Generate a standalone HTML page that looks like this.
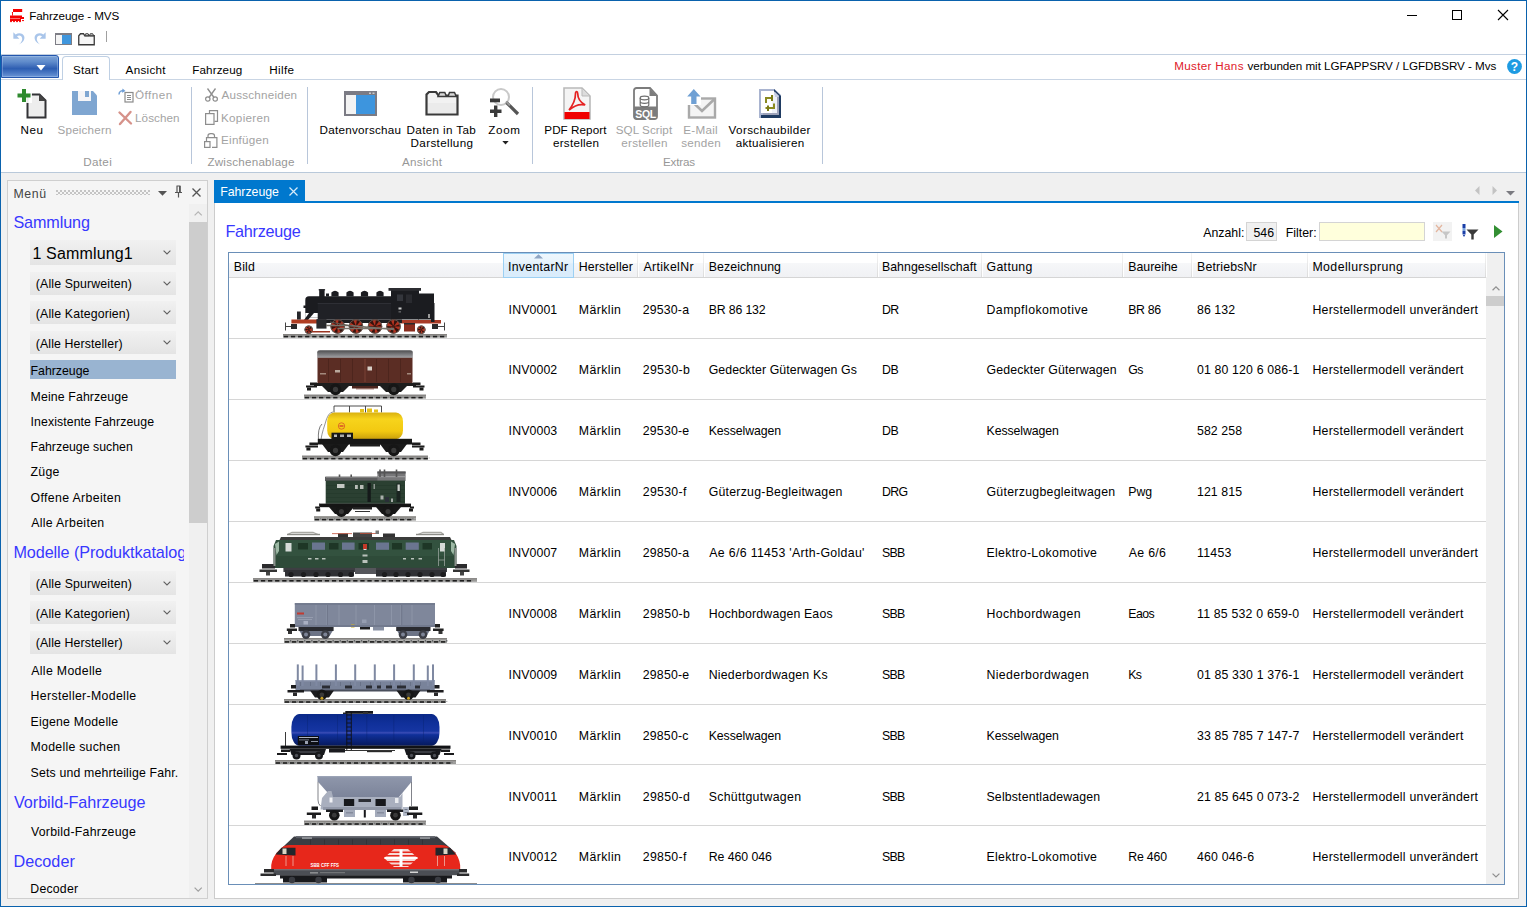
<!DOCTYPE html>
<html lang="de"><head><meta charset="utf-8"><title>Fahrzeuge - MVS</title>
<style>
html,body{margin:0;padding:0}
body{width:1527px;height:907px;overflow:hidden;position:relative;background:#f0f0f0;font-family:"Liberation Sans", sans-serif;color:#000}
.a{position:absolute;box-sizing:border-box}
.t{position:absolute;white-space:pre;line-height:1;}
svg{overflow:visible}
svg text{font-family:"Liberation Sans", sans-serif}
</style></head><body>
<div class="a" style="left:0px;top:0px;width:1527px;height:172px;background:#fff;"></div>
<div class="a" style="left:1px;top:54px;width:1525px;height:1px;background:#c3d0e0;"></div>
<div class="a" style="left:1px;top:79px;width:1525px;height:1px;background:#c9d5e4;"></div>
<div class="a" style="left:1px;top:172px;width:1525px;height:1px;background:#b9c9da;"></div>
<svg class="a" style="left:9px;top:8px;" width="16" height="15" viewBox="0 0 16 15"><g fill="#f50000"><rect x="4" y="1" width="9.200" height="3"/><rect x="3.100" y="4" width=".9" height="3.600"/><circle cx="3.400" cy="4.500" r=".6"/><path d="M1 7.500H13V9H15V11H12V13H1z"/><rect x="13" y="12.100" width="2" height="1"/><circle cx="2" cy="13.300" r="1"/><circle cx="5" cy="13.300" r="1"/><circle cx="8" cy="13.300" r="1"/><circle cx="11" cy="13.300" r="1"/></g><rect x="1.200" y="10.200" width="9.800" height=".7" fill="#f9a0a0"/></svg>
<svg class="a" style="left:1400px;top:5px;" width="120" height="22" viewBox="0 0 120 22"><g stroke="#000" stroke-width="1" fill="none" shape-rendering="crispEdges"><path d="M7 10.5h10"/><rect x="52.5" y="5.5" width="9" height="9"/></g><path d="M98 5l10 10M108 5l-10 10" stroke="#000" stroke-width="1.1" fill="none"/></svg>
<svg class="a" style="left:11px;top:31px;" width="15" height="15" viewBox="0 0 14 14"><path d="M2.2 1.2v6h5.6l-2.2-2.2c1.6-1.3 4-.9 4.7 1.2.7 2.2-.6 4.6-3.3 6.6 4.2-1.700 6.300-4.900 5.300-7.800-1.100-3-5-3.800-8-1.700z" fill="#a9c5ea"/></svg>
<svg class="a" style="left:33px;top:31px;" width="15" height="15" viewBox="0 0 14 14"><path d="M11.8 1.200v6h-5.600l2.200-2.200c-1.600-1.300-4-.9-4.700 1.200-.7 2.200.6 4.600 3.300 6.600-4.200-1.700-6.300-4.900-5.300-7.800 1.100-3 5-3.800 8-1.700z" fill="#a9c5ea"/></svg>
<svg class="a" style="left:55px;top:33px;" width="17" height="12" viewBox="0 0 17 12"><rect x="0.500" y="0.500" width="16" height="11" fill="#f4f4f4" stroke="#7d7d85"/><rect x="0" y="0" width="17" height="2" fill="#7d7d85"/><rect x="7" y="2" width="9" height="9" fill="#3f96dd"/></svg>
<svg class="a" style="left:78px;top:32.5px;" width="17" height="12.5" viewBox="0 0 34 25"><path d="M1.500 23.500V5.500L5 1.500h6l2.500 4H32.500V23.500z" fill="#f6f6f6" stroke="#3a3a3a" stroke-width="2.600"/><path d="M13.500 5.500l1.800-4h5l1.700 4zM23 5.500l1.500-4h5l1.800 4z" fill="#d9d9d9" stroke="#3a3a3a" stroke-width="2"/></svg>
<div class="a" style="left:106px;top:31px;width:1px;height:11px;background:#a0a0a0;"></div>
<div class="a" style="left:1px;top:55px;width:58px;height:23px;background:linear-gradient(#7da3d6 0,#5f8bcb 28%,#3b69b8 52%,#2d5eb2 60%,#4a78c3 80%,#6b96d6 100%);border:1px solid #2456ad;border-radius:0 3px 0 0;box-shadow:inset 0 0 0 1px rgba(190,215,245,.35);"></div>
<svg class="a" style="left:35.5px;top:64.5px;" width="10" height="6" viewBox="0 0 10 6"><path d="M0.500 0h9L5 5.500z" fill="#fff"/></svg>
<div class="a" style="left:62px;top:56px;width:48px;height:24px;background:#fff;border:1px solid #bfd0e4;border-bottom:none;border-radius:4px 4px 0 0;"></div>
<svg class="a" style="left:1507px;top:59px;" width="15" height="15" viewBox="0 0 15 15"><circle cx="7.500" cy="7.500" r="7.400" fill="#1e9be2"/><text x="7.500" y="12" font-size="12" font-weight="bold" fill="#fff" text-anchor="middle">?</text></svg>
<div class="a" style="left:0px;top:0px;width:1527px;height:1px;background:#0a62ad;"></div>
<div class="a" style="left:0px;top:0px;width:1px;height:907px;background:#0a62ad;"></div>
<div class="a" style="left:1526px;top:0px;width:1px;height:907px;background:#0a62ad;"></div>
<div class="a" style="left:0px;top:906px;width:1527px;height:1px;background:#0a62ad;"></div>
<div class="a" style="left:191px;top:87px;width:1px;height:77px;background:#b8c6da;"></div>
<div class="a" style="left:307px;top:87px;width:1px;height:77px;background:#b8c6da;"></div>
<div class="a" style="left:532px;top:87px;width:1px;height:77px;background:#b8c6da;"></div>
<div class="a" style="left:822px;top:87px;width:1px;height:77px;background:#b8c6da;"></div>
<svg class="a" style="left:17px;top:88.5px;" width="30" height="30" viewBox="0 0 30 30"><path d="M10.500 5.500h12l6 6V28.500h-18z" fill="#ededed" stroke="#333336" stroke-width="2"/><path d="M22 5v7h7z" fill="#444"/><rect x="0" y="0" width="15" height="14" fill="#fff" opacity=".9"/><path d="M5 0h4v4.500h4.500v4H9V13H5V8.500H.5v-4H5z" fill="#2f8a2f"/></svg>
<svg class="a" style="left:72px;top:91px;" width="25" height="24" viewBox="0 0 25 24"><path d="M0 0h21l4 4.500V24H0z" fill="#7fa6d1"/><rect x="6" y="0" width="13" height="10" fill="#f5f5f7"/><rect x="13" y="0" width="4" height="6" fill="#7fa6d1"/></svg>
<svg class="a" style="left:118px;top:88px;" width="16" height="15" viewBox="0 0 16 15"><rect x="7" y="4.500" width="8" height="9.500" fill="#fff" stroke="#8b8b8b" stroke-width="1.200"/><path d="M9 7.500h4M9 9.500h4M9 11.500h4" stroke="#8b8b8b" stroke-width="1"/><path d="M1 6.500c0-3 2.500-4.500 5-3.500" fill="none" stroke="#6f9fd6" stroke-width="1.500"/><path d="M4.500 0.500l3 2.500-3.500 1.800z" fill="#6f9fd6"/></svg>
<svg class="a" style="left:118px;top:111px;" width="15" height="14" viewBox="0 0 15 14"><path d="M1.500 1.500L13 12.500M12.500 1L2 13" stroke="#d6928a" stroke-width="2.400" fill="none" stroke-linecap="round"/></svg>
<svg class="a" style="left:205px;top:88px;" width="13" height="14" viewBox="0 0 13 14"><path d="M2.500 0.500L9 9.500M10.500 0.500L4 9.500" stroke="#8d8d8d" stroke-width="1.300" fill="none"/><circle cx="2.800" cy="11" r="2.200" fill="none" stroke="#8d8d8d" stroke-width="1.200"/><circle cx="10.200" cy="11" r="2.200" fill="none" stroke="#8d8d8d" stroke-width="1.200"/></svg>
<svg class="a" style="left:205px;top:110px;" width="13" height="15" viewBox="0 0 13 15"><path d="M4.500 3.500V0.700h8v10.600H9.500" fill="none" stroke="#8d8d8d" stroke-width="1.200"/><rect x="0.600" y="3.600" width="8.400" height="10.800" fill="#fdfdfd" stroke="#8d8d8d" stroke-width="1.200"/></svg>
<svg class="a" style="left:204px;top:133px;" width="14" height="15" viewBox="0 0 14 15"><path d="M4 4.500V2.800C4 1.500 5 .6 6.500 .6h1.500C9.500 .6 10.500 1.500 10.500 2.800v1.700" fill="none" stroke="#8d8d8d" stroke-width="1.200"/><path d="M2.500 8V4.600h10.400v9.800H8" fill="none" stroke="#8d8d8d" stroke-width="1.200"/><rect x="0.600" y="8.600" width="5.400" height="5.800" fill="#fff" stroke="#8d8d8d" stroke-width="1.200"/></svg>
<svg class="a" style="left:344px;top:91px;" width="33" height="25" viewBox="0 0 33 25"><rect x="1" y="1" width="31" height="23" fill="#f3f3f3" stroke="#7b7b84" stroke-width="2"/><rect x="0" y="0" width="33" height="4" fill="#7b7b84"/><rect x="12" y="4" width="19" height="19" fill="#3d95de"/><rect x="25" y="1.500" width="2" height="1.500" fill="#ccc"/><rect x="28.500" y="1.500" width="2" height="1.500" fill="#ccc"/></svg>
<svg class="a" style="left:425px;top:91px;" width="34" height="25" viewBox="0 0 34 25"><path d="M1.500 23.500V3.500L4 1h7l2.500 3.500H32.500V23.500z" fill="#f2f2f2" stroke="#3a3a3a" stroke-width="2.200"/><path d="M13 5.500l1.800-4h5l1.700 4zM23 5.500l1.500-4h5l1.800 4z" fill="#d9d9d9" stroke="#3a3a3a" stroke-width="1.500"/><rect x="3" y="12" width="28" height="10" fill="#e6e6e6" opacity=".6"/></svg>
<svg class="a" style="left:489px;top:88px;" width="31" height="31" viewBox="0 0 31 31"><circle cx="12" cy="9" r="8" fill="#fff" stroke="#c9c9c9" stroke-width="2"/><path d="M17.500 14.500L29 26" stroke="#555" stroke-width="3.200"/><path d="M17 13.500l4 4" stroke="#999" stroke-width="2"/><rect x="1" y="10.500" width="10" height="3.800" fill="#3a3a3a"/><path d="M5 17.500h3.400v4H12.500v3.400H8.400V29H5v-4.100H1V21.500h4z" fill="#3a3a3a"/></svg>
<svg class="a" style="left:502px;top:141px;" width="7" height="4" viewBox="0 0 7 4"><path d="M0.300 0h6.400L3.500 3.600z" fill="#222"/></svg>
<svg class="a" style="left:563px;top:87px;" width="28" height="33" viewBox="0 0 28 33"><path d="M1 1h18l8 8v23H1z" fill="#f4f4f4" stroke="#b9b9b9" stroke-width="1.600"/><path d="M19 1v8h8z" fill="#dcdcdc" stroke="#b9b9b9" stroke-width="1"/><rect x="1.500" y="25" width="25" height="7" fill="#f00000"/><path d="M6 23c4-5 6.500-11 6.500-16.500 0-2.500 2.200-2.500 2.200 0 0 5 3 9 7.500 11.500-4.500-1.200-10-.2-16.200 5z" fill="none" stroke="#e52222" stroke-width="1.700"/></svg>
<svg class="a" style="left:633px;top:87px;" width="25" height="33" viewBox="0 0 25 33"><path d="M1 3.500c0-1.400 1-2.500 2.500-2.500H17l7 7.500V29.500c0 1.400-1 2.500-2.500 2.500h-18C2 32 1 31 1 29.500z" fill="#fff" stroke="#7c7c7c" stroke-width="1.800"/><path d="M16.500 1v8H24z" fill="#7c7c7c"/><path d="M1 19.500h23v10.500c0 1.200-1 2-2.500 2h-18C2 32 1 31 1 30z" fill="#7c7c7c"/><ellipse cx="11.500" cy="11" rx="4.300" ry="1.800" fill="#fff" stroke="#6e6e6e" stroke-width="1.200"/><path d="M7.200 11v7c0 1 2 1.800 4.300 1.800s4.300-.8 4.300-1.800v-7M7.200 14.500c0 1 2 1.800 4.300 1.800s4.300-.8 4.300-1.800" fill="none" stroke="#6e6e6e" stroke-width="1.200"/><text x="12.500" y="30.600" font-size="10.500" font-weight="bold" fill="#fff" text-anchor="middle" letter-spacing="-.4">SQL</text></svg>
<svg class="a" style="left:687px;top:89px;" width="30" height="30" viewBox="0 0 30 30"><rect x="2" y="9.500" width="26" height="19" fill="#f4f4f4" stroke="#a9a9a9" stroke-width="2.400"/><path d="M3 10.500l12 11.500 12-11.500" fill="none" stroke="#a9a9a9" stroke-width="2.600"/><rect x="0" y="0" width="14" height="16" fill="#fff"/><path d="M6.800 0l6.700 7.500H9.500V15H4.200V7.500H.2z" fill="#6fa0d4"/></svg>
<svg class="a" style="left:759px;top:89px;" width="23" height="30" viewBox="0 0 23 30"><path d="M0 0H15.500L22 6V29H0z" fill="#a9b4d0"/><rect x="2" y="2" width="13.500" height="22" fill="#fff"/><rect x="13" y="6" width="5" height="18" fill="#eef1f8"/><rect x="4" y="24" width="14" height="2" fill="#9ea3ba"/><rect x="18" y="8" width="2" height="18" fill="#9ea3ba"/><rect x="2" y="26" width="20" height="3" fill="#1f3b62"/><rect x="20" y="7" width="2" height="22" fill="#1f3b62"/><path d="M15 0L22 7H20L15 2.500z" fill="#1f3b62"/><path d="M15.500 2.500L19.500 6.500V8H16z" fill="#c9d0e4"/><path d="M7 14V9H13.500M15 14.500V19H6.500" fill="none" stroke="#8a8a20" stroke-width="2"/><path d="M13 6V12M9 16.500V22" fill="none" stroke="#7a7a14" stroke-width="2"/></svg>
<div class="a" style="left:7px;top:180px;width:201px;height:719px;background:#f5f5f5;border:1px solid #cfcfcf;"></div>
<div class="a" style="left:56px;top:190px;width:94px;height:5px;background-image:radial-gradient(circle at 1px 1px,#c4c4c4 .8px,transparent 1.1px),radial-gradient(circle at 3px 3px,#c4c4c4 .8px,transparent 1.100px);background-size:4px 4px;"></div>
<svg class="a" style="left:158px;top:191px;" width="9" height="5" viewBox="0 0 9 5"><path d="M0 0h9L4.500 4.800z" fill="#555"/></svg>
<svg class="a" style="left:174px;top:185px;" width="9" height="13" viewBox="0 0 9 13"><path d="M2.500 1h4M3 1v6M6 1v6M1 7.500h7M4.500 7.500v5" stroke="#555" stroke-width="1.200" fill="none"/><rect x="5" y="1" width="1.600" height="6" fill="#555"/></svg>
<svg class="a" style="left:192px;top:188px;" width="9" height="9" viewBox="0 0 9 9"><path d="M0.500 .5l8 8M8.500 .5l-8 8" stroke="#555" stroke-width="1.300" fill="none"/></svg>
<div class="a" style="left:189px;top:204px;width:18px;height:694px;background:#f0f0f0;"></div>
<div class="a" style="left:189px;top:222px;width:18px;height:301px;background:#cdcdcd;"></div>
<svg class="a" style="left:193.5px;top:211.3px;" width="8.4" height="5" viewBox="0 0 10 6"><path d="M0.700 5.300L5 1l4.300 4.300" stroke="#b5b5b5" stroke-width="1.500" fill="none"/></svg>
<svg class="a" style="left:193.7px;top:886.5px;" width="8.4" height="5" viewBox="0 0 10 6"><path d="M0.700 .7L5 5l4.300-4.300" stroke="#a0a0a0" stroke-width="1.500" fill="none"/></svg>
<div class="a" style="left:30px;top:240px;width:146px;height:25px;background:linear-gradient(#f1f1f1,#e4e4e4);"></div>
<svg class="a" style="left:163px;top:250.0px;" width="8" height="5" viewBox="0 0 8 5"><path d="M0.600 .6L4 4l3.400-3.400" stroke="#606060" stroke-width="1.100" fill="none"/></svg>
<div class="a" style="left:30px;top:272px;width:146px;height:23px;background:linear-gradient(#f1f1f1,#e4e4e4);"></div>
<svg class="a" style="left:163px;top:281.0px;" width="8" height="5" viewBox="0 0 8 5"><path d="M0.600 .6L4 4l3.400-3.400" stroke="#606060" stroke-width="1.100" fill="none"/></svg>
<div class="a" style="left:30px;top:301px;width:146px;height:23px;background:linear-gradient(#f1f1f1,#e4e4e4);"></div>
<svg class="a" style="left:163px;top:310.0px;" width="8" height="5" viewBox="0 0 8 5"><path d="M0.600 .6L4 4l3.400-3.400" stroke="#606060" stroke-width="1.100" fill="none"/></svg>
<div class="a" style="left:30px;top:331px;width:146px;height:23px;background:linear-gradient(#f1f1f1,#e4e4e4);"></div>
<svg class="a" style="left:163px;top:340.0px;" width="8" height="5" viewBox="0 0 8 5"><path d="M0.600 .6L4 4l3.400-3.400" stroke="#606060" stroke-width="1.100" fill="none"/></svg>
<div class="a" style="left:30px;top:360px;width:146px;height:19px;background:#99b4d1;"></div>
<div class="a" style="left:30px;top:571px;width:146px;height:24px;background:linear-gradient(#f1f1f1,#e4e4e4);"></div>
<svg class="a" style="left:163px;top:580.5px;" width="8" height="5" viewBox="0 0 8 5"><path d="M0.600 .6L4 4l3.400-3.400" stroke="#606060" stroke-width="1.100" fill="none"/></svg>
<div class="a" style="left:30px;top:601px;width:146px;height:23px;background:linear-gradient(#f1f1f1,#e4e4e4);"></div>
<svg class="a" style="left:163px;top:610.0px;" width="8" height="5" viewBox="0 0 8 5"><path d="M0.600 .6L4 4l3.400-3.400" stroke="#606060" stroke-width="1.100" fill="none"/></svg>
<div class="a" style="left:30px;top:631px;width:146px;height:23px;background:linear-gradient(#f1f1f1,#e4e4e4);"></div>
<svg class="a" style="left:163px;top:640.0px;" width="8" height="5" viewBox="0 0 8 5"><path d="M0.600 .6L4 4l3.400-3.400" stroke="#606060" stroke-width="1.100" fill="none"/></svg>
<div class="a" style="left:214px;top:203px;width:1305px;height:696px;background:#fff;border:1px solid #ccc;border-top:none;"></div>
<div class="a" style="left:214px;top:201px;width:1305px;height:2px;background:#0078ce;"></div>
<div class="a" style="left:214px;top:180px;width:91px;height:22px;background:#0078ce;"></div>
<svg class="a" style="left:289px;top:187px;" width="9" height="9" viewBox="0 0 9 9"><path d="M0.500 .5l8 8M8.500 .5l-8 8" stroke="#d8ecfa" stroke-width="1.200" fill="none"/></svg>
<svg class="a" style="left:1475px;top:186px;" width="5" height="9" viewBox="0 0 5 9"><path d="M4.500 0v9L0 4.500z" fill="#c3c3c3"/></svg>
<svg class="a" style="left:1492px;top:186px;" width="5" height="9" viewBox="0 0 5 9"><path d="M0.500 0v9L5 4.500z" fill="#c3c3c3"/></svg>
<svg class="a" style="left:1506px;top:191px;" width="9" height="5" viewBox="0 0 9 5"><path d="M0 0h9L4.500 4.600z" fill="#7a7a80"/></svg>
<div class="a" style="left:1246px;top:222px;width:31px;height:19px;background:#f0f0f0;border:1px solid #d4d4d4;"></div>
<div class="a" style="left:1319px;top:222px;width:106px;height:19px;background:#ffffdc;border:1px solid #d4d4d4;"></div>
<div class="a" style="left:1433px;top:222px;width:19px;height:19px;background:#f2f2f2;"></div>
<svg class="a" style="left:1435px;top:224px;" width="16" height="15" viewBox="0 0 16 15"><path d="M1 1l6 7M7 1L1 8" stroke="#e3b59e" stroke-width="1.200" fill="none"/><path d="M6.500 7.500h9l-3.500 3.800v3.200h-2v-3.200z" fill="#c6c6c6"/></svg>
<svg class="a" style="left:1462px;top:224px;" width="17" height="16" viewBox="0 0 17 16"><rect x="0.500" y="0" width="3" height="4" fill="#1a3fa8"/><rect x="0.500" y="4" width="3" height="3" fill="#7aa2dc"/><rect x="0.500" y="7" width="3" height="3.500" fill="#1a3fa8"/><path d="M0.800 11h2.400L2 13z" fill="#1a3fa8"/><path d="M4.500 5.500h12l-4.800 5v5h-2.400v-5z" fill="#3a3a3a"/></svg>
<svg class="a" style="left:1493.5px;top:225px;" width="9" height="13" viewBox="0 0 9 13"><path d="M0 0v13l8.500-6.500z" fill="#338f33"/></svg>
<div class="a" style="left:228px;top:252px;width:1277px;height:633px;background:#fff;border:1px solid #6a8fb8;"></div>
<div class="a" style="left:229px;top:253px;width:1257px;height:25px;background:linear-gradient(#fff 0,#fff 40%,#f6f7f9 42%,#f0f1f4 100%);border-bottom:1px solid #d5d5d5;"></div>
<div class="a" style="left:1486px;top:253px;width:18px;height:631px;background:#f0f0f0;"></div>
<div class="a" style="left:1486px;top:296px;width:18px;height:10px;background:#cdcdcd;"></div>
<svg class="a" style="left:1491.5px;top:285.5px;" width="8" height="4.8" viewBox="0 0 10 6"><path d="M0.700 5.300L5 1l4.300 4.300" stroke="#8f8f8f" stroke-width="1.500" fill="none"/></svg>
<svg class="a" style="left:1491.5px;top:873px;" width="8" height="4.8" viewBox="0 0 10 6"><path d="M0.700 .7L5 5l4.300-4.300" stroke="#8f8f8f" stroke-width="1.500" fill="none"/></svg>
<div class="a" style="left:503px;top:253px;width:71px;height:25px;background:linear-gradient(#eef7fd 0,#e7f3fc 40%,#dcedfb 42%,#d9ecfb 100%);border:1px solid #9cd0f3;"></div>
<svg class="a" style="left:534px;top:254px;" width="9" height="5" viewBox="0 0 9 5"><path d="M0 4.500L4.500 .3 9 4.500z" fill="#8fa6c4"/></svg>
<div class="a" style="left:637px;top:253px;width:1px;height:24px;background:linear-gradient(#f4f4f4,#dcdcdc);"></div>
<div class="a" style="left:638px;top:253px;width:1px;height:24px;background:#fff;"></div>
<div class="a" style="left:703px;top:253px;width:1px;height:24px;background:linear-gradient(#f4f4f4,#dcdcdc);"></div>
<div class="a" style="left:704px;top:253px;width:1px;height:24px;background:#fff;"></div>
<div class="a" style="left:877px;top:253px;width:1px;height:24px;background:linear-gradient(#f4f4f4,#dcdcdc);"></div>
<div class="a" style="left:878px;top:253px;width:1px;height:24px;background:#fff;"></div>
<div class="a" style="left:981px;top:253px;width:1px;height:24px;background:linear-gradient(#f4f4f4,#dcdcdc);"></div>
<div class="a" style="left:982px;top:253px;width:1px;height:24px;background:#fff;"></div>
<div class="a" style="left:1122px;top:253px;width:1px;height:24px;background:linear-gradient(#f4f4f4,#dcdcdc);"></div>
<div class="a" style="left:1123px;top:253px;width:1px;height:24px;background:#fff;"></div>
<div class="a" style="left:1191px;top:253px;width:1px;height:24px;background:linear-gradient(#f4f4f4,#dcdcdc);"></div>
<div class="a" style="left:1192px;top:253px;width:1px;height:24px;background:#fff;"></div>
<div class="a" style="left:1307px;top:253px;width:1px;height:24px;background:linear-gradient(#f4f4f4,#dcdcdc);"></div>
<div class="a" style="left:1308px;top:253px;width:1px;height:24px;background:#fff;"></div>
<div class="a" style="left:1485px;top:253px;width:1px;height:24px;background:linear-gradient(#f4f4f4,#dcdcdc);"></div>
<div class="a" style="left:1486px;top:253px;width:1px;height:24px;background:#fff;"></div>
<div class="a" style="left:229px;top:338px;width:1257px;height:1px;background:#d6d6d6;"></div>
<div class="a" style="left:229px;top:399px;width:1257px;height:1px;background:#d6d6d6;"></div>
<div class="a" style="left:229px;top:460px;width:1257px;height:1px;background:#d6d6d6;"></div>
<div class="a" style="left:229px;top:521px;width:1257px;height:1px;background:#d6d6d6;"></div>
<div class="a" style="left:229px;top:582px;width:1257px;height:1px;background:#d6d6d6;"></div>
<div class="a" style="left:229px;top:643px;width:1257px;height:1px;background:#d6d6d6;"></div>
<div class="a" style="left:229px;top:704px;width:1257px;height:1px;background:#d6d6d6;"></div>
<div class="a" style="left:229px;top:764px;width:1257px;height:1px;background:#d6d6d6;"></div>
<div class="a" style="left:229px;top:825px;width:1257px;height:1px;background:#d6d6d6;"></div>
<svg class="a" style="left:229px;top:278px;overflow:hidden;" width="274" height="606" viewBox="229 278 274 606"><defs>
<linearGradient id="roofg" x1="0" y1="0" x2="0" y2="1"><stop offset="0" stop-color="#4c4c4e"/><stop offset=".55" stop-color="#7d7d80"/><stop offset="1" stop-color="#a5a5a8"/></linearGradient>
<linearGradient id="yel" x1="0" y1="0" x2="0" y2="1"><stop offset="0" stop-color="#d9b010"/><stop offset=".25" stop-color="#f7d41c"/><stop offset=".7" stop-color="#f2c911"/><stop offset="1" stop-color="#c99f0c"/></linearGradient>
<linearGradient id="blu" x1="0" y1="0" x2="0" y2="1"><stop offset="0" stop-color="#0a2988"/><stop offset=".3" stop-color="#10309a"/><stop offset=".54" stop-color="#1635a2"/><stop offset=".59" stop-color="#3a4cb6"/><stop offset=".65" stop-color="#10309a"/><stop offset="1" stop-color="#06195c"/></linearGradient>
<linearGradient id="hop" x1="0" y1="0" x2="0" y2="1"><stop offset="0" stop-color="#8f97ab"/><stop offset="1" stop-color="#7c849a"/></linearGradient>
</defs><rect x="283.0" y="334.0" width="164.0" height="3.6" fill="#9a9a98" /><rect x="283.0" y="334.0" width="164.0" height="1.1" fill="#858380" /><rect x="283.0" y="335.9" width="164.0" height="0.0" fill="#b2b2b0" /><rect x="283.8" y="335.8" width="4.3" height="1.6" fill="#1d1d1d" /><rect x="288.9" y="336.1" width="1.3" height="0.1" fill="#5a5c61" /><rect x="290.9" y="335.8" width="4.3" height="1.6" fill="#1d1d1d" /><rect x="296.0" y="336.1" width="1.3" height="0.1" fill="#5a5c61" /><rect x="298.0" y="335.8" width="4.3" height="1.6" fill="#1d1d1d" /><rect x="303.1" y="336.1" width="1.3" height="0.1" fill="#5a5c61" /><rect x="305.1" y="335.8" width="4.3" height="1.6" fill="#1d1d1d" /><rect x="310.2" y="336.1" width="1.3" height="0.1" fill="#5a5c61" /><rect x="312.2" y="335.8" width="4.3" height="1.6" fill="#1d1d1d" /><rect x="317.3" y="336.1" width="1.3" height="0.1" fill="#5a5c61" /><rect x="319.3" y="335.8" width="4.3" height="1.6" fill="#1d1d1d" /><rect x="324.4" y="336.1" width="1.3" height="0.1" fill="#5a5c61" /><rect x="326.4" y="335.8" width="4.3" height="1.6" fill="#1d1d1d" /><rect x="331.5" y="336.1" width="1.3" height="0.1" fill="#5a5c61" /><rect x="333.5" y="335.8" width="4.3" height="1.6" fill="#1d1d1d" /><rect x="338.6" y="336.1" width="1.3" height="0.1" fill="#5a5c61" /><rect x="340.6" y="335.8" width="4.3" height="1.6" fill="#1d1d1d" /><rect x="345.7" y="336.1" width="1.3" height="0.1" fill="#5a5c61" /><rect x="347.7" y="335.8" width="4.3" height="1.6" fill="#1d1d1d" /><rect x="352.8" y="336.1" width="1.3" height="0.1" fill="#5a5c61" /><rect x="354.8" y="335.8" width="4.3" height="1.6" fill="#1d1d1d" /><rect x="359.9" y="336.1" width="1.3" height="0.1" fill="#5a5c61" /><rect x="361.9" y="335.8" width="4.3" height="1.6" fill="#1d1d1d" /><rect x="367.0" y="336.1" width="1.3" height="0.1" fill="#5a5c61" /><rect x="369.0" y="335.8" width="4.3" height="1.6" fill="#1d1d1d" /><rect x="374.1" y="336.1" width="1.3" height="0.1" fill="#5a5c61" /><rect x="376.1" y="335.8" width="4.3" height="1.6" fill="#1d1d1d" /><rect x="381.2" y="336.1" width="1.3" height="0.1" fill="#5a5c61" /><rect x="383.2" y="335.8" width="4.3" height="1.6" fill="#1d1d1d" /><rect x="388.3" y="336.1" width="1.3" height="0.1" fill="#5a5c61" /><rect x="390.3" y="335.8" width="4.3" height="1.6" fill="#1d1d1d" /><rect x="395.4" y="336.1" width="1.3" height="0.1" fill="#5a5c61" /><rect x="397.4" y="335.8" width="4.3" height="1.6" fill="#1d1d1d" /><rect x="402.5" y="336.1" width="1.3" height="0.1" fill="#5a5c61" /><rect x="404.5" y="335.8" width="4.3" height="1.6" fill="#1d1d1d" /><rect x="409.6" y="336.1" width="1.3" height="0.1" fill="#5a5c61" /><rect x="411.6" y="335.8" width="4.3" height="1.6" fill="#1d1d1d" /><rect x="416.7" y="336.1" width="1.3" height="0.1" fill="#5a5c61" /><rect x="418.7" y="335.8" width="4.3" height="1.6" fill="#1d1d1d" /><rect x="423.8" y="336.1" width="1.3" height="0.1" fill="#5a5c61" /><rect x="425.8" y="335.8" width="4.3" height="1.6" fill="#1d1d1d" /><rect x="430.9" y="336.1" width="1.3" height="0.1" fill="#5a5c61" /><rect x="432.9" y="335.8" width="4.3" height="1.6" fill="#1d1d1d" /><rect x="438.0" y="336.1" width="1.3" height="0.1" fill="#5a5c61" /><rect x="440.0" y="335.8" width="4.3" height="1.6" fill="#1d1d1d" /><rect x="445.1" y="336.1" width="1.3" height="0.1" fill="#5a5c61" /><path d="M305.3 300 Q305.3 296.300 309 296.300 H391 V317.500 H305.3 Z" fill="#1b1c20" /><rect x="305.3" y="313.0" width="12.7" height="4.5" fill="#fff" /><path d="M309 313 L304 320 H308 L314 313Z" fill="#1b1c20" /><rect x="317.7" y="303.0" width="74.3" height="16.5" fill="#202126" /><rect x="317.7" y="303.0" width="74.3" height="0.8" fill="#33343a" /><rect x="391.0" y="290.0" width="28.0" height="29.5" fill="#1b1c20" /><rect x="388.5" y="288.0" width="32.5" height="2.8" fill="#2c2d31" /><rect x="418.0" y="293.5" width="16.0" height="26.0" fill="#1b1c20" /><rect x="319.2" y="289.2" width="5.4" height="7.8" fill="#1b1c20" /><rect x="318.7" y="289.2" width="6.4" height="1.2" fill="#26272b" /><path d="M331.4 296.500 V292.500 Q335 289.200 338.6 292.500 V296.500Z" fill="#1b1c20" /><path d="M346.4 296.500 V292.500 Q350 289.200 353.6 292.500 V296.500Z" fill="#1b1c20" /><path d="M360.9 296.500 V292.500 Q364.5 289.200 368.1 292.500 V296.500Z" fill="#1b1c20" /><path d="M376.4 296.500 V292.500 Q380 289.200 383.6 292.500 V296.500Z" fill="#1b1c20" /><rect x="326.0" y="293.5" width="3.0" height="3.0" fill="#1b1c20" /><rect x="397.0" y="294.5" width="6.0" height="6.5" fill="#34363c" /><rect x="406.0" y="294.5" width="6.0" height="8.5" fill="#2a2b30" /><rect x="398.5" y="307.5" width="3.0" height="2.0" fill="#c9c9c9" /><rect x="398.5" y="311.5" width="2.5" height="0.8" fill="#999" /><rect x="428.0" y="314.0" width="2.0" height="4.0" fill="#9a9a9a" /><rect x="303.5" y="305.5" width="2.5" height="2.5" fill="#1b1c20" /><rect x="291.4" y="319.5" width="25.6" height="4.0" fill="#b03d22" /><rect x="400.0" y="320.0" width="41.0" height="3.5" fill="#a83a26" /><rect x="317.0" y="319.5" width="85.0" height="3.5" fill="#1d1d20" /><rect x="297.0" y="311.5" width="3.8" height="8.0" fill="#26272b" /><rect x="316.4" y="319.2" width="10.1" height="9.4" fill="#2a2a2d" /><circle cx="337.7" cy="326.5" r="7.2" fill="#35120d" /><circle cx="337.7" cy="326.5" r="3.6" fill="none" stroke="#b23220" stroke-width="5.76" stroke-dasharray="1.87 1.91"/><circle cx="337.7" cy="326.5" r="6.8" fill="none" stroke="#6e5f57" stroke-width="0.900"/><circle cx="337.7" cy="326.5" r="1.584" fill="#4a1a12" /><circle cx="356.0" cy="326.5" r="7.2" fill="#35120d" /><circle cx="356.0" cy="326.5" r="3.6" fill="none" stroke="#b23220" stroke-width="5.76" stroke-dasharray="1.87 1.91"/><circle cx="356.0" cy="326.5" r="6.8" fill="none" stroke="#6e5f57" stroke-width="0.900"/><circle cx="356.0" cy="326.5" r="1.584" fill="#4a1a12" /><circle cx="375.0" cy="326.5" r="7.2" fill="#35120d" /><circle cx="375.0" cy="326.5" r="3.6" fill="none" stroke="#b23220" stroke-width="5.76" stroke-dasharray="1.87 1.91"/><circle cx="375.0" cy="326.5" r="6.8" fill="none" stroke="#6e5f57" stroke-width="0.900"/><circle cx="375.0" cy="326.5" r="1.584" fill="#4a1a12" /><circle cx="393.5" cy="326.5" r="7.2" fill="#35120d" /><circle cx="393.5" cy="326.5" r="3.6" fill="none" stroke="#b23220" stroke-width="5.76" stroke-dasharray="1.87 1.91"/><circle cx="393.5" cy="326.5" r="6.8" fill="none" stroke="#6e5f57" stroke-width="0.900"/><circle cx="393.5" cy="326.5" r="1.584" fill="#4a1a12" /><circle cx="308.7" cy="329.7" r="4.2" fill="#35120d" /><circle cx="308.7" cy="329.7" r="2.1" fill="none" stroke="#b23220" stroke-width="3.36" stroke-dasharray="1.09 1.11"/><circle cx="308.7" cy="329.7" r="3.8000000000000003" fill="none" stroke="#6e5f57" stroke-width="0.900"/><circle cx="308.7" cy="329.7" r="0.924" fill="#4a1a12" /><circle cx="421.3" cy="329.7" r="4.2" fill="#35120d" /><circle cx="421.3" cy="329.7" r="2.1" fill="none" stroke="#b23220" stroke-width="3.36" stroke-dasharray="1.09 1.11"/><circle cx="421.3" cy="329.7" r="3.8000000000000003" fill="none" stroke="#6e5f57" stroke-width="0.900"/><circle cx="421.3" cy="329.7" r="0.924" fill="#4a1a12" /><path d="M326 325.500 H349 L394 329.500 M337.500 328.500 H394" fill="none" stroke="#77726a" stroke-width="1.300"/><path d="M330 322 L352 326" fill="none" stroke="#5d5952" stroke-width="1"/><rect x="404.0" y="323.0" width="11.0" height="8.5" fill="#8a2d1e" /><rect x="404.0" y="323.0" width="11.0" height="1.5" fill="#2a2a2c" /><rect x="312.0" y="331.0" width="18.0" height="1.5" fill="#9c3522" /><path d="M285.500 322.500 V330.500 M285.500 326.500 H293" fill="none" stroke="#444" stroke-width="1"/><path d="M444.500 322.500 V330.500 M444.500 326.500 H437" fill="none" stroke="#444" stroke-width="1"/><rect x="291.0" y="324.0" width="6.0" height="5.0" fill="#2a2a2c" /><rect x="432.0" y="324.0" width="6.0" height="5.0" fill="#2a2a2c" /><rect x="431.0" y="303.0" width="3.5" height="19.0" fill="#1b1c20" /><rect x="304.0" y="394.7" width="122.0" height="3.9" fill="#9a9a98" /><rect x="304.0" y="394.7" width="122.0" height="1.1" fill="#858380" /><rect x="304.0" y="396.6" width="122.0" height="0.3" fill="#b2b2b0" /><rect x="304.8" y="396.8" width="4.3" height="1.6" fill="#1d1d1d" /><rect x="309.9" y="396.8" width="1.3" height="0.4" fill="#5a5c61" /><rect x="311.9" y="396.8" width="4.3" height="1.6" fill="#1d1d1d" /><rect x="317.0" y="396.8" width="1.3" height="0.4" fill="#5a5c61" /><rect x="319.0" y="396.8" width="4.3" height="1.6" fill="#1d1d1d" /><rect x="324.1" y="396.8" width="1.3" height="0.4" fill="#5a5c61" /><rect x="326.1" y="396.8" width="4.3" height="1.6" fill="#1d1d1d" /><rect x="331.2" y="396.8" width="1.3" height="0.4" fill="#5a5c61" /><rect x="333.2" y="396.8" width="4.3" height="1.6" fill="#1d1d1d" /><rect x="338.3" y="396.8" width="1.3" height="0.4" fill="#5a5c61" /><rect x="340.3" y="396.8" width="4.3" height="1.6" fill="#1d1d1d" /><rect x="345.4" y="396.8" width="1.3" height="0.4" fill="#5a5c61" /><rect x="347.4" y="396.8" width="4.3" height="1.6" fill="#1d1d1d" /><rect x="352.5" y="396.8" width="1.3" height="0.4" fill="#5a5c61" /><rect x="354.5" y="396.8" width="4.3" height="1.6" fill="#1d1d1d" /><rect x="359.6" y="396.8" width="1.3" height="0.4" fill="#5a5c61" /><rect x="361.6" y="396.8" width="4.3" height="1.6" fill="#1d1d1d" /><rect x="366.7" y="396.8" width="1.3" height="0.4" fill="#5a5c61" /><rect x="368.7" y="396.8" width="4.3" height="1.6" fill="#1d1d1d" /><rect x="373.8" y="396.8" width="1.3" height="0.4" fill="#5a5c61" /><rect x="375.8" y="396.8" width="4.3" height="1.6" fill="#1d1d1d" /><rect x="380.9" y="396.8" width="1.3" height="0.4" fill="#5a5c61" /><rect x="382.9" y="396.8" width="4.3" height="1.6" fill="#1d1d1d" /><rect x="388.0" y="396.8" width="1.3" height="0.4" fill="#5a5c61" /><rect x="390.0" y="396.8" width="4.3" height="1.6" fill="#1d1d1d" /><rect x="395.1" y="396.8" width="1.3" height="0.4" fill="#5a5c61" /><rect x="397.1" y="396.8" width="4.3" height="1.6" fill="#1d1d1d" /><rect x="402.2" y="396.8" width="1.3" height="0.4" fill="#5a5c61" /><rect x="404.2" y="396.8" width="4.3" height="1.6" fill="#1d1d1d" /><rect x="409.3" y="396.8" width="1.3" height="0.4" fill="#5a5c61" /><rect x="411.3" y="396.8" width="4.3" height="1.6" fill="#1d1d1d" /><rect x="416.4" y="396.8" width="1.3" height="0.4" fill="#5a5c61" /><rect x="418.4" y="396.8" width="4.3" height="1.6" fill="#1d1d1d" /><rect x="423.5" y="396.8" width="1.3" height="0.4" fill="#5a5c61" /><path d="M317.2 358 V352.500 Q317.2 350.200 320 350.200 H410 Q412.800 350.200 412.800 352.500 V358Z" fill="url(#roofg)" /><rect x="317.5" y="357.8" width="95.0" height="25.2" fill="#5b2d24" /><rect x="328.0" y="359.0" width="0.8" height="23.0" fill="#4a231c" /><rect x="340.0" y="359.0" width="0.8" height="23.0" fill="#4a231c" /><rect x="352.0" y="359.0" width="0.8" height="23.0" fill="#4a231c" /><rect x="364.0" y="359.0" width="0.8" height="23.0" fill="#4a231c" /><rect x="376.0" y="359.0" width="0.8" height="23.0" fill="#4a231c" /><rect x="388.0" y="359.0" width="0.8" height="23.0" fill="#4a231c" /><rect x="400.0" y="359.0" width="0.8" height="23.0" fill="#4a231c" /><rect x="364.0" y="359.0" width="2.0" height="23.0" fill="#6a372c" /><rect x="367.5" y="366.5" width="4.5" height="4.0" fill="#d8d0c8" /><rect x="335.0" y="370.0" width="5.0" height="2.5" fill="#b9a89c" /><rect x="320.0" y="373.0" width="6.0" height="1.5" fill="#a3897d" /><rect x="407.0" y="373.0" width="4.0" height="1.5" fill="#a3897d" /><rect x="314.0" y="383.0" width="102.0" height="3.0" fill="#1d1d1d" /><path d="M322 386 H349 L343 392 H328Z" fill="#1d1d1d" /><path d="M380 386 H407 L401 392 H386Z" fill="#1d1d1d" /><circle cx="335.5" cy="389.4" r="5.8" fill="#161616" /><circle cx="335.5" cy="389.4" r="2.61" fill="#3a3a3a" /><circle cx="393.8" cy="389.4" r="5.8" fill="#161616" /><circle cx="393.8" cy="389.4" r="2.61" fill="#3a3a3a" /><rect x="352.0" y="386.0" width="26.0" height="2.5" fill="#4a241d" /><rect x="356.0" y="388.5" width="18.0" height="0.8" fill="#7b4336" /><rect x="310.0" y="382.5" width="7.0" height="2.6" fill="#1c1c1c" /><rect x="306.0" y="385.5" width="11.0" height="2.0" fill="#1c1c1c" /><rect x="307.0" y="387.5" width="4.0" height="3.0" fill="#1c1c1c" /><rect x="413.0" y="382.5" width="7.5" height="2.6" fill="#1c1c1c" /><rect x="413.0" y="385.5" width="11.5" height="2.0" fill="#1c1c1c" /><rect x="419.5" y="387.5" width="4.0" height="3.0" fill="#1c1c1c" /><rect x="302.0" y="455.7" width="126.0" height="3.9" fill="#9a9a98" /><rect x="302.0" y="455.7" width="126.0" height="1.1" fill="#858380" /><rect x="302.0" y="457.6" width="126.0" height="0.3" fill="#b2b2b0" /><rect x="302.8" y="457.8" width="4.3" height="1.6" fill="#1d1d1d" /><rect x="307.9" y="457.8" width="1.3" height="0.4" fill="#5a5c61" /><rect x="309.9" y="457.8" width="4.3" height="1.6" fill="#1d1d1d" /><rect x="315.0" y="457.8" width="1.3" height="0.4" fill="#5a5c61" /><rect x="317.0" y="457.8" width="4.3" height="1.6" fill="#1d1d1d" /><rect x="322.1" y="457.8" width="1.3" height="0.4" fill="#5a5c61" /><rect x="324.1" y="457.8" width="4.3" height="1.6" fill="#1d1d1d" /><rect x="329.2" y="457.8" width="1.3" height="0.4" fill="#5a5c61" /><rect x="331.2" y="457.8" width="4.3" height="1.6" fill="#1d1d1d" /><rect x="336.3" y="457.8" width="1.3" height="0.4" fill="#5a5c61" /><rect x="338.3" y="457.8" width="4.3" height="1.6" fill="#1d1d1d" /><rect x="343.4" y="457.8" width="1.3" height="0.4" fill="#5a5c61" /><rect x="345.4" y="457.8" width="4.3" height="1.6" fill="#1d1d1d" /><rect x="350.5" y="457.8" width="1.3" height="0.4" fill="#5a5c61" /><rect x="352.5" y="457.8" width="4.3" height="1.6" fill="#1d1d1d" /><rect x="357.6" y="457.8" width="1.3" height="0.4" fill="#5a5c61" /><rect x="359.6" y="457.8" width="4.3" height="1.6" fill="#1d1d1d" /><rect x="364.7" y="457.8" width="1.3" height="0.4" fill="#5a5c61" /><rect x="366.7" y="457.8" width="4.3" height="1.6" fill="#1d1d1d" /><rect x="371.8" y="457.8" width="1.3" height="0.4" fill="#5a5c61" /><rect x="373.8" y="457.8" width="4.3" height="1.6" fill="#1d1d1d" /><rect x="378.9" y="457.8" width="1.3" height="0.4" fill="#5a5c61" /><rect x="380.9" y="457.8" width="4.3" height="1.6" fill="#1d1d1d" /><rect x="386.0" y="457.8" width="1.3" height="0.4" fill="#5a5c61" /><rect x="388.0" y="457.8" width="4.3" height="1.6" fill="#1d1d1d" /><rect x="393.1" y="457.8" width="1.3" height="0.4" fill="#5a5c61" /><rect x="395.1" y="457.8" width="4.3" height="1.6" fill="#1d1d1d" /><rect x="400.2" y="457.8" width="1.3" height="0.4" fill="#5a5c61" /><rect x="402.2" y="457.8" width="4.3" height="1.6" fill="#1d1d1d" /><rect x="407.3" y="457.8" width="1.3" height="0.4" fill="#5a5c61" /><rect x="409.3" y="457.8" width="4.3" height="1.6" fill="#1d1d1d" /><rect x="414.4" y="457.8" width="1.3" height="0.4" fill="#5a5c61" /><rect x="416.4" y="457.8" width="4.3" height="1.6" fill="#1d1d1d" /><rect x="421.5" y="457.8" width="1.3" height="0.4" fill="#5a5c61" /><rect x="423.5" y="457.8" width="4.3" height="1.6" fill="#1d1d1d" /><rect x="428.6" y="457.8" width="1.3" height="0.4" fill="#5a5c61" /><path d="M334 412.500 V406 H381.500 V412.500 M349.500 406 V412.500 M365.500 406 V412.500" fill="none" stroke="#3a3a3a" stroke-width="0.900"/><path d="M333 412 Q328 412 325 424 Q321 436 321 441" fill="none" stroke="#7a7a7a" stroke-width="0.800"/><path d="M318.500 441 Q317.500 428 322 424" fill="none" stroke="#555" stroke-width="0.800"/><rect x="327.200" y="412.400" width="75.800" height="26.800" rx="7" ry="9" fill="url(#yel)"/><rect x="360.0" y="409.0" width="4.0" height="3.5" fill="#e6c21a" /><rect x="367.0" y="408.5" width="5.0" height="4.0" fill="#e6c21a" /><rect x="374.0" y="409.5" width="4.0" height="3.0" fill="#e6c21a" /><circle cx="341.5" cy="426.0" r="3.2" fill="none" stroke="#d8452a" stroke-width="0.700"/><rect x="339.5" y="425.3" width="4.0" height="1.4" fill="#d8452a" /><rect x="331.5" y="432.7" width="21.5" height="6.8" fill="#171717" /><rect x="334.0" y="434.5" width="3.0" height="2.5" fill="#bbb" /><rect x="340.0" y="434.5" width="4.0" height="2.5" fill="#aaa" /><rect x="347.0" y="434.5" width="4.0" height="2.5" fill="#bbb" /><rect x="317.8" y="438.8" width="94.2" height="5.7" fill="#161616" /><path d="M322 444 H349 L343 452 H328Z" fill="#1a1a1a" /><path d="M380 444 H407 L401 452 H386Z" fill="#1a1a1a" /><circle cx="335.5" cy="450.4" r="5.8" fill="#161616" /><circle cx="335.5" cy="450.4" r="2.61" fill="#3a3a3a" /><circle cx="393.8" cy="450.4" r="5.8" fill="#161616" /><circle cx="393.8" cy="450.4" r="2.61" fill="#3a3a3a" /><rect x="350.0" y="444.0" width="30.0" height="2.5" fill="#1d1d1d" /><rect x="309.4" y="442.5" width="8.6" height="2.6" fill="#1c1c1c" /><rect x="305.4" y="445.5" width="12.6" height="2.0" fill="#1c1c1c" /><rect x="306.4" y="447.5" width="4.0" height="3.0" fill="#1c1c1c" /><rect x="412.0" y="442.5" width="8.5" height="2.6" fill="#1c1c1c" /><rect x="412.0" y="445.5" width="12.5" height="2.0" fill="#1c1c1c" /><rect x="419.5" y="447.5" width="4.0" height="3.0" fill="#1c1c1c" /><rect x="314.0" y="516.4" width="102.0" height="4.2" fill="#9a9a98" /><rect x="314.0" y="516.4" width="102.0" height="1.1" fill="#858380" /><rect x="314.0" y="518.3" width="102.0" height="0.6" fill="#b2b2b0" /><rect x="314.8" y="518.8" width="4.3" height="1.6" fill="#1d1d1d" /><rect x="319.9" y="518.5" width="1.3" height="0.7" fill="#5a5c61" /><rect x="321.9" y="518.8" width="4.3" height="1.6" fill="#1d1d1d" /><rect x="327.0" y="518.5" width="1.3" height="0.7" fill="#5a5c61" /><rect x="329.0" y="518.8" width="4.3" height="1.6" fill="#1d1d1d" /><rect x="334.1" y="518.5" width="1.3" height="0.7" fill="#5a5c61" /><rect x="336.1" y="518.8" width="4.3" height="1.6" fill="#1d1d1d" /><rect x="341.2" y="518.5" width="1.3" height="0.7" fill="#5a5c61" /><rect x="343.2" y="518.8" width="4.3" height="1.6" fill="#1d1d1d" /><rect x="348.3" y="518.5" width="1.3" height="0.7" fill="#5a5c61" /><rect x="350.3" y="518.8" width="4.3" height="1.6" fill="#1d1d1d" /><rect x="355.4" y="518.5" width="1.3" height="0.7" fill="#5a5c61" /><rect x="357.4" y="518.8" width="4.3" height="1.6" fill="#1d1d1d" /><rect x="362.5" y="518.5" width="1.3" height="0.7" fill="#5a5c61" /><rect x="364.5" y="518.8" width="4.3" height="1.6" fill="#1d1d1d" /><rect x="369.6" y="518.5" width="1.3" height="0.7" fill="#5a5c61" /><rect x="371.6" y="518.8" width="4.3" height="1.6" fill="#1d1d1d" /><rect x="376.7" y="518.5" width="1.3" height="0.7" fill="#5a5c61" /><rect x="378.7" y="518.8" width="4.3" height="1.6" fill="#1d1d1d" /><rect x="383.8" y="518.5" width="1.3" height="0.7" fill="#5a5c61" /><rect x="385.8" y="518.8" width="4.3" height="1.6" fill="#1d1d1d" /><rect x="390.9" y="518.5" width="1.3" height="0.7" fill="#5a5c61" /><rect x="392.9" y="518.8" width="4.3" height="1.6" fill="#1d1d1d" /><rect x="398.0" y="518.5" width="1.3" height="0.7" fill="#5a5c61" /><rect x="400.0" y="518.8" width="4.3" height="1.6" fill="#1d1d1d" /><rect x="405.1" y="518.5" width="1.3" height="0.7" fill="#5a5c61" /><rect x="407.1" y="518.8" width="4.3" height="1.6" fill="#1d1d1d" /><rect x="412.2" y="518.5" width="1.3" height="0.7" fill="#5a5c61" /><rect x="325.0" y="476.7" width="53.0" height="4.3" fill="#5e5e60" /><rect x="326.0" y="476.7" width="52.0" height="1.0" fill="#8a8a8c" /><rect x="377.4" y="471.5" width="28.2" height="9.5" fill="#777779" /><rect x="377.4" y="471.5" width="28.2" height="2.0" fill="#555557" /><rect x="378.0" y="476.0" width="27.0" height="1.3" fill="#9a9a9c" /><rect x="338.7" y="474.5" width="1.6" height="2.5" fill="#555" /><rect x="350.4" y="474.5" width="1.6" height="2.5" fill="#555" /><rect x="379.2" y="469.5" width="1.6" height="7.5" fill="#555" /><rect x="383.7" y="469.5" width="1.6" height="7.5" fill="#555" /><rect x="395.7" y="469.5" width="1.6" height="7.5" fill="#555" /><rect x="325.7" y="480.6" width="79.3" height="23.2" fill="#2b4032" /><rect x="326.0" y="485.0" width="78.5" height="0.5" fill="#233629" /><rect x="326.0" y="489.0" width="78.5" height="0.5" fill="#233629" /><rect x="326.0" y="493.0" width="78.5" height="0.5" fill="#233629" /><rect x="326.0" y="497.0" width="78.5" height="0.5" fill="#233629" /><rect x="326.0" y="501.0" width="78.5" height="0.5" fill="#233629" /><rect x="337.0" y="484.0" width="7.5" height="4.0" fill="#c5c8c4" /><rect x="355.0" y="485.0" width="2.8" height="4.0" fill="#b9bdb8" /><rect x="360.0" y="485.0" width="3.5" height="4.0" fill="#b9bdb8" /><rect x="367.5" y="483.0" width="3.3" height="19.0" fill="#15191a" /><rect x="373.5" y="484.0" width="1.5" height="5.0" fill="#8d948f" /><rect x="396.5" y="483.5" width="4.0" height="18.5" fill="#1a2420" /><rect x="397.5" y="484.5" width="2.3" height="6.5" fill="#cfd3cf" /><rect x="380.5" y="495.5" width="3.0" height="4.0" fill="#aab0ac" /><rect x="385.0" y="497.0" width="4.0" height="5.0" fill="#2a2f38" /><rect x="391.0" y="498.5" width="2.0" height="3.5" fill="#a5aaa6" /><rect x="319.5" y="503.6" width="91.5" height="3.6" fill="#151515" /><path d="M329 507 H354 L348 514 H335Z" fill="#171717" /><path d="M376 507 H401 L395 514 H382Z" fill="#171717" /><circle cx="341.4" cy="511.4" r="5.6" fill="#161616" /><circle cx="341.4" cy="511.4" r="2.52" fill="#3a3a3a" /><circle cx="388.0" cy="511.4" r="5.6" fill="#161616" /><circle cx="388.0" cy="511.4" r="2.52" fill="#3a3a3a" /><rect x="353.0" y="507.0" width="19.0" height="2.5" fill="#222" /><rect x="355.0" y="511.0" width="15.0" height="1.0" fill="#333" /><rect x="319.2" y="503.5" width="0.8" height="2.6" fill="#1c1c1c" /><rect x="315.2" y="506.5" width="4.8" height="2.0" fill="#1c1c1c" /><rect x="316.2" y="508.5" width="4.0" height="3.0" fill="#1c1c1c" /><rect x="410.0" y="503.5" width="0.0" height="2.6" fill="#1c1c1c" /><rect x="410.0" y="506.5" width="4.0" height="2.0" fill="#1c1c1c" /><rect x="409.0" y="508.5" width="4.0" height="3.0" fill="#1c1c1c" /><rect x="253.0" y="578.2" width="224.0" height="3.6" fill="#9a9a98" /><rect x="253.0" y="578.2" width="224.0" height="1.1" fill="#858380" /><rect x="253.0" y="580.1" width="224.0" height="-0.0" fill="#b2b2b0" /><rect x="253.8" y="580.0" width="4.3" height="1.6" fill="#1d1d1d" /><rect x="258.9" y="580.3" width="1.3" height="0.1" fill="#5a5c61" /><rect x="260.9" y="580.0" width="4.3" height="1.6" fill="#1d1d1d" /><rect x="266.0" y="580.3" width="1.3" height="0.1" fill="#5a5c61" /><rect x="268.0" y="580.0" width="4.3" height="1.6" fill="#1d1d1d" /><rect x="273.1" y="580.3" width="1.3" height="0.1" fill="#5a5c61" /><rect x="275.1" y="580.0" width="4.3" height="1.6" fill="#1d1d1d" /><rect x="280.2" y="580.3" width="1.3" height="0.1" fill="#5a5c61" /><rect x="282.2" y="580.0" width="4.3" height="1.6" fill="#1d1d1d" /><rect x="287.3" y="580.3" width="1.3" height="0.1" fill="#5a5c61" /><rect x="289.3" y="580.0" width="4.3" height="1.6" fill="#1d1d1d" /><rect x="294.4" y="580.3" width="1.3" height="0.1" fill="#5a5c61" /><rect x="296.4" y="580.0" width="4.3" height="1.6" fill="#1d1d1d" /><rect x="301.5" y="580.3" width="1.3" height="0.1" fill="#5a5c61" /><rect x="303.5" y="580.0" width="4.3" height="1.6" fill="#1d1d1d" /><rect x="308.6" y="580.3" width="1.3" height="0.1" fill="#5a5c61" /><rect x="310.6" y="580.0" width="4.3" height="1.6" fill="#1d1d1d" /><rect x="315.7" y="580.3" width="1.3" height="0.1" fill="#5a5c61" /><rect x="317.7" y="580.0" width="4.3" height="1.6" fill="#1d1d1d" /><rect x="322.8" y="580.3" width="1.3" height="0.1" fill="#5a5c61" /><rect x="324.8" y="580.0" width="4.3" height="1.6" fill="#1d1d1d" /><rect x="329.9" y="580.3" width="1.3" height="0.1" fill="#5a5c61" /><rect x="331.9" y="580.0" width="4.3" height="1.6" fill="#1d1d1d" /><rect x="337.0" y="580.3" width="1.3" height="0.1" fill="#5a5c61" /><rect x="339.0" y="580.0" width="4.3" height="1.6" fill="#1d1d1d" /><rect x="344.1" y="580.3" width="1.3" height="0.1" fill="#5a5c61" /><rect x="346.1" y="580.0" width="4.3" height="1.6" fill="#1d1d1d" /><rect x="351.2" y="580.3" width="1.3" height="0.1" fill="#5a5c61" /><rect x="353.2" y="580.0" width="4.3" height="1.6" fill="#1d1d1d" /><rect x="358.3" y="580.3" width="1.3" height="0.1" fill="#5a5c61" /><rect x="360.3" y="580.0" width="4.3" height="1.6" fill="#1d1d1d" /><rect x="365.4" y="580.3" width="1.3" height="0.1" fill="#5a5c61" /><rect x="367.4" y="580.0" width="4.3" height="1.6" fill="#1d1d1d" /><rect x="372.5" y="580.3" width="1.3" height="0.1" fill="#5a5c61" /><rect x="374.5" y="580.0" width="4.3" height="1.6" fill="#1d1d1d" /><rect x="379.6" y="580.3" width="1.3" height="0.1" fill="#5a5c61" /><rect x="381.6" y="580.0" width="4.3" height="1.6" fill="#1d1d1d" /><rect x="386.7" y="580.3" width="1.3" height="0.1" fill="#5a5c61" /><rect x="388.7" y="580.0" width="4.3" height="1.6" fill="#1d1d1d" /><rect x="393.8" y="580.3" width="1.3" height="0.1" fill="#5a5c61" /><rect x="395.8" y="580.0" width="4.3" height="1.6" fill="#1d1d1d" /><rect x="400.9" y="580.3" width="1.3" height="0.1" fill="#5a5c61" /><rect x="402.9" y="580.0" width="4.3" height="1.6" fill="#1d1d1d" /><rect x="408.0" y="580.3" width="1.3" height="0.1" fill="#5a5c61" /><rect x="410.0" y="580.0" width="4.3" height="1.6" fill="#1d1d1d" /><rect x="415.1" y="580.3" width="1.3" height="0.1" fill="#5a5c61" /><rect x="417.1" y="580.0" width="4.3" height="1.6" fill="#1d1d1d" /><rect x="422.2" y="580.3" width="1.3" height="0.1" fill="#5a5c61" /><rect x="424.2" y="580.0" width="4.3" height="1.6" fill="#1d1d1d" /><rect x="429.3" y="580.3" width="1.3" height="0.1" fill="#5a5c61" /><rect x="431.3" y="580.0" width="4.3" height="1.6" fill="#1d1d1d" /><rect x="436.4" y="580.3" width="1.3" height="0.1" fill="#5a5c61" /><rect x="438.4" y="580.0" width="4.3" height="1.6" fill="#1d1d1d" /><rect x="443.5" y="580.3" width="1.3" height="0.1" fill="#5a5c61" /><rect x="445.5" y="580.0" width="4.3" height="1.6" fill="#1d1d1d" /><rect x="450.6" y="580.3" width="1.3" height="0.1" fill="#5a5c61" /><rect x="452.6" y="580.0" width="4.3" height="1.6" fill="#1d1d1d" /><rect x="457.7" y="580.3" width="1.3" height="0.1" fill="#5a5c61" /><rect x="459.7" y="580.0" width="4.3" height="1.6" fill="#1d1d1d" /><rect x="464.8" y="580.3" width="1.3" height="0.1" fill="#5a5c61" /><rect x="466.8" y="580.0" width="4.3" height="1.6" fill="#1d1d1d" /><rect x="471.9" y="580.3" width="1.3" height="0.1" fill="#5a5c61" /><path d="M287.500 534.500 L292 532.500 H313 L318 534.500 M418 534.500 L423 532.500 H441 L443.500 534.500" fill="none" stroke="#a9a9a4" stroke-width="1.300"/><rect x="287.0" y="533.8" width="33.0" height="1.4" fill="#8d8d88" /><rect x="416.0" y="533.8" width="28.0" height="1.4" fill="#8d8d88" /><rect x="338.0" y="533.5" width="10.0" height="3.5" fill="#333" /><rect x="353.0" y="532.5" width="19.0" height="4.5" fill="#444" /><rect x="383.0" y="533.5" width="12.0" height="3.5" fill="#333" /><rect x="332.0" y="533.3" width="20.0" height="0.8" fill="#c0503a" /><rect x="360.0" y="533.0" width="18.0" height="0.8" fill="#c0503a" /><rect x="375.5" y="530.5" width="3.5" height="3.5" fill="#777" /><path d="M279.500 540 L281 537 H450 L451.500 540Z" fill="#3b3c3b" /><path d="M276 540 H454 L456.500 546 V566 L455 568 H275 L273.500 566 V546Z" fill="#33523f" /><rect x="274.0" y="556.0" width="182.0" height="12.0" fill="#2e4b39" /><rect x="312.0" y="542.5" width="13.0" height="7.3" fill="#6a7590" /><rect x="342.0" y="542.5" width="12.6" height="7.3" fill="#6a7590" /><rect x="376.0" y="542.5" width="13.0" height="7.3" fill="#6a7590" /><rect x="405.7" y="542.5" width="13.1" height="7.3" fill="#6a7590" /><rect x="298.0" y="543.0" width="10.0" height="6.5" fill="#1e3626" /><rect x="329.0" y="543.0" width="9.5" height="6.5" fill="#1e3626" /><rect x="358.5" y="543.0" width="10.5" height="6.5" fill="#1e3626" /><rect x="392.0" y="543.0" width="10.0" height="6.5" fill="#1e3626" /><rect x="422.5" y="543.0" width="9.5" height="6.5" fill="#1e3626" /><rect x="285.5" y="543.0" width="6.0" height="8.5" fill="#d6dbd8" /><rect x="440.0" y="543.0" width="5.0" height="8.5" fill="#d6dbd8" /><path d="M275 544 L279 541.500 V551 L276.500 555Z" fill="#9db9a5" /><path d="M455 544 L451 541.500 V551 L453.500 555Z" fill="#9db9a5" /><rect x="363.0" y="544.0" width="4.0" height="5.0" fill="#c23a2a" /><rect x="363.5" y="549.0" width="3.0" height="1.0" fill="#ddd" /><rect x="308.0" y="558.0" width="3.5" height="1.5" fill="#b9c2bb" /><rect x="315.0" y="558.0" width="3.5" height="1.5" fill="#b9c2bb" /><rect x="322.0" y="558.0" width="3.5" height="1.5" fill="#b9c2bb" /><rect x="403.0" y="558.0" width="3.0" height="1.5" fill="#b9c2bb" /><rect x="411.0" y="558.0" width="3.0" height="1.5" fill="#b9c2bb" /><rect x="418.5" y="558.0" width="3.5" height="1.5" fill="#b9c2bb" /><rect x="362.5" y="554.5" width="5.0" height="2.0" fill="#b9c2bb" /><rect x="362.5" y="560.0" width="5.0" height="3.0" fill="#b9c2bb" /><path d="M438.500 548 V566 M444.500 548 V566 M438.500 560 H444.500" fill="none" stroke="#a5ada7" stroke-width="0.700"/><rect x="283.4" y="567.8" width="163.6" height="4.2" fill="#3d3e42" /><rect x="285.0" y="570.0" width="69.0" height="6.5" fill="#2f3034" /><rect x="376.0" y="570.0" width="70.0" height="6.5" fill="#2f3034" /><rect x="355.0" y="568.0" width="21.0" height="6.0" fill="#55565b" /><circle cx="291.0" cy="574.5" r="2.6" fill="#1c1c1e" /><circle cx="303.5" cy="574.5" r="2.6" fill="#1c1c1e" /><circle cx="316.0" cy="574.5" r="2.6" fill="#1c1c1e" /><circle cx="328.0" cy="574.5" r="2.6" fill="#1c1c1e" /><circle cx="340.5" cy="574.5" r="2.6" fill="#1c1c1e" /><circle cx="351.0" cy="574.5" r="2.6" fill="#1c1c1e" /><circle cx="384.5" cy="574.5" r="2.6" fill="#1c1c1e" /><circle cx="396.0" cy="574.5" r="2.6" fill="#1c1c1e" /><circle cx="408.0" cy="574.5" r="2.6" fill="#1c1c1e" /><circle cx="420.0" cy="574.5" r="2.6" fill="#1c1c1e" /><circle cx="432.0" cy="574.5" r="2.6" fill="#1c1c1e" /><circle cx="443.0" cy="574.5" r="2.6" fill="#1c1c1e" /><rect x="262.0" y="564.0" width="13.0" height="4.5" fill="#2b2b2d" /><rect x="259.5" y="569.5" width="17.5" height="2.5" fill="#333" /><rect x="455.0" y="564.0" width="12.0" height="4.5" fill="#2b2b2d" /><rect x="453.0" y="569.5" width="16.5" height="2.5" fill="#333" /><rect x="266.0" y="572.0" width="4.0" height="3.5" fill="#444" /><rect x="460.0" y="572.0" width="4.0" height="3.5" fill="#444" /><rect x="273.5" y="548.0" width="2.0" height="18.0" fill="#8a918c" /><rect x="454.5" y="548.0" width="2.0" height="18.0" fill="#8a918c" /><rect x="284.0" y="638.0" width="163.0" height="4.9" fill="#9a9a98" /><rect x="284.0" y="638.0" width="163.0" height="1.1" fill="#858380" /><rect x="284.0" y="639.9" width="163.0" height="1.3" fill="#b2b2b0" /><rect x="284.8" y="641.1" width="4.3" height="1.6" fill="#1d1d1d" /><rect x="289.9" y="640.1" width="1.3" height="1.4" fill="#5a5c61" /><rect x="291.9" y="641.1" width="4.3" height="1.6" fill="#1d1d1d" /><rect x="297.0" y="640.1" width="1.3" height="1.4" fill="#5a5c61" /><rect x="299.0" y="641.1" width="4.3" height="1.6" fill="#1d1d1d" /><rect x="304.1" y="640.1" width="1.3" height="1.4" fill="#5a5c61" /><rect x="306.1" y="641.1" width="4.3" height="1.6" fill="#1d1d1d" /><rect x="311.2" y="640.1" width="1.3" height="1.4" fill="#5a5c61" /><rect x="313.2" y="641.1" width="4.3" height="1.6" fill="#1d1d1d" /><rect x="318.3" y="640.1" width="1.3" height="1.4" fill="#5a5c61" /><rect x="320.3" y="641.1" width="4.3" height="1.6" fill="#1d1d1d" /><rect x="325.4" y="640.1" width="1.3" height="1.4" fill="#5a5c61" /><rect x="327.4" y="641.1" width="4.3" height="1.6" fill="#1d1d1d" /><rect x="332.5" y="640.1" width="1.3" height="1.4" fill="#5a5c61" /><rect x="334.5" y="641.1" width="4.3" height="1.6" fill="#1d1d1d" /><rect x="339.6" y="640.1" width="1.3" height="1.4" fill="#5a5c61" /><rect x="341.6" y="641.1" width="4.3" height="1.6" fill="#1d1d1d" /><rect x="346.7" y="640.1" width="1.3" height="1.4" fill="#5a5c61" /><rect x="348.7" y="641.1" width="4.3" height="1.6" fill="#1d1d1d" /><rect x="353.8" y="640.1" width="1.3" height="1.4" fill="#5a5c61" /><rect x="355.8" y="641.1" width="4.3" height="1.6" fill="#1d1d1d" /><rect x="360.9" y="640.1" width="1.3" height="1.4" fill="#5a5c61" /><rect x="362.9" y="641.1" width="4.3" height="1.6" fill="#1d1d1d" /><rect x="368.0" y="640.1" width="1.3" height="1.4" fill="#5a5c61" /><rect x="370.0" y="641.1" width="4.3" height="1.6" fill="#1d1d1d" /><rect x="375.1" y="640.1" width="1.3" height="1.4" fill="#5a5c61" /><rect x="377.1" y="641.1" width="4.3" height="1.6" fill="#1d1d1d" /><rect x="382.2" y="640.1" width="1.3" height="1.4" fill="#5a5c61" /><rect x="384.2" y="641.1" width="4.3" height="1.6" fill="#1d1d1d" /><rect x="389.3" y="640.1" width="1.3" height="1.4" fill="#5a5c61" /><rect x="391.3" y="641.1" width="4.3" height="1.6" fill="#1d1d1d" /><rect x="396.4" y="640.1" width="1.3" height="1.4" fill="#5a5c61" /><rect x="398.4" y="641.1" width="4.3" height="1.6" fill="#1d1d1d" /><rect x="403.5" y="640.1" width="1.3" height="1.4" fill="#5a5c61" /><rect x="405.5" y="641.1" width="4.3" height="1.6" fill="#1d1d1d" /><rect x="410.6" y="640.1" width="1.3" height="1.4" fill="#5a5c61" /><rect x="412.6" y="641.1" width="4.3" height="1.6" fill="#1d1d1d" /><rect x="417.7" y="640.1" width="1.3" height="1.4" fill="#5a5c61" /><rect x="419.7" y="641.1" width="4.3" height="1.6" fill="#1d1d1d" /><rect x="424.8" y="640.1" width="1.3" height="1.4" fill="#5a5c61" /><rect x="426.8" y="641.1" width="4.3" height="1.6" fill="#1d1d1d" /><rect x="431.9" y="640.1" width="1.3" height="1.4" fill="#5a5c61" /><rect x="433.9" y="641.1" width="4.3" height="1.6" fill="#1d1d1d" /><rect x="439.0" y="640.1" width="1.3" height="1.4" fill="#5a5c61" /><rect x="441.0" y="641.1" width="4.3" height="1.6" fill="#1d1d1d" /><rect x="446.1" y="640.1" width="1.3" height="1.4" fill="#5a5c61" /><rect x="294.8" y="603.2" width="140.2" height="23.6" fill="#7f879b" /><rect x="294.8" y="603.2" width="140.2" height="1.4" fill="#6d7589" /><rect x="315.5" y="605.0" width="1.0" height="20.5" fill="#8d95a8" /><rect x="326.0" y="605.0" width="1.0" height="20.5" fill="#8d95a8" /><rect x="338.5" y="605.0" width="1.0" height="20.5" fill="#8d95a8" /><rect x="355.5" y="605.0" width="1.0" height="20.5" fill="#8d95a8" /><rect x="374.0" y="605.0" width="1.0" height="20.5" fill="#8d95a8" /><rect x="391.0" y="605.0" width="1.0" height="20.5" fill="#8d95a8" /><rect x="400.5" y="605.0" width="1.0" height="20.5" fill="#8d95a8" /><rect x="411.5" y="605.0" width="1.0" height="20.5" fill="#8d95a8" /><rect x="326.8" y="605.0" width="0.9" height="20.5" fill="#6b7387" /><rect x="401.3" y="605.0" width="0.9" height="20.5" fill="#6b7387" /><rect x="297.0" y="612.5" width="7.0" height="2.0" fill="#c23b31" /><rect x="297.0" y="617.0" width="16.0" height="0.8" fill="#9ba2b3" /><rect x="298.0" y="619.0" width="14.0" height="0.8" fill="#9ba2b3" /><rect x="303.5" y="621.0" width="4.5" height="3.5" fill="#a9b0c2" /><rect x="362.0" y="619.5" width="4.5" height="3.5" fill="#959db0" /><rect x="351.0" y="624.5" width="3.5" height="3.0" fill="#d8b31c" /><rect x="294.8" y="625.0" width="140.2" height="2.0" fill="#727a8e" /><rect x="360.0" y="627.0" width="10.0" height="2.5" fill="#1d1d1f" /><rect x="373.0" y="627.0" width="11.0" height="3.5" fill="#8890a3" /><rect x="298.5" y="627.0" width="35.1" height="4.0" fill="#2a2b30" /><path d="M299.5 631 H332.6 L329.6 636 H302.5Z" fill="#6d7486" /><rect x="396.2" y="627.0" width="34.3" height="4.0" fill="#2a2b30" /><path d="M397.2 631 H429.5 L426.5 636 H400.2Z" fill="#6d7486" /><circle cx="306.0" cy="634.6" r="4.3" fill="#3b3d45" /><circle cx="306.0" cy="634.6" r="2" fill="#7d8496" /><circle cx="325.3" cy="634.6" r="4.3" fill="#3b3d45" /><circle cx="325.3" cy="634.6" r="2" fill="#7d8496" /><circle cx="403.0" cy="634.6" r="4.3" fill="#3b3d45" /><circle cx="403.0" cy="634.6" r="2" fill="#7d8496" /><circle cx="423.0" cy="634.6" r="4.3" fill="#3b3d45" /><circle cx="423.0" cy="634.6" r="2" fill="#7d8496" /><rect x="290.0" y="624.0" width="5.0" height="3.5" fill="#222" /><rect x="286.8" y="628.5" width="10.2" height="2.5" fill="#222" /><rect x="288.0" y="631.0" width="4.0" height="3.0" fill="#333" /><rect x="435.0" y="624.0" width="5.0" height="3.5" fill="#222" /><rect x="433.0" y="628.5" width="10.6" height="2.5" fill="#222" /><rect x="438.5" y="631.0" width="4.0" height="3.0" fill="#333" /><rect x="284.0" y="699.0" width="162.0" height="4.0" fill="#9a9a98" /><rect x="284.0" y="699.0" width="162.0" height="1.1" fill="#858380" /><rect x="284.0" y="700.9" width="162.0" height="0.4" fill="#b2b2b0" /><rect x="284.8" y="701.2" width="4.3" height="1.6" fill="#1d1d1d" /><rect x="289.9" y="701.1" width="1.3" height="0.5" fill="#5a5c61" /><rect x="291.9" y="701.2" width="4.3" height="1.6" fill="#1d1d1d" /><rect x="297.0" y="701.1" width="1.3" height="0.5" fill="#5a5c61" /><rect x="299.0" y="701.2" width="4.3" height="1.6" fill="#1d1d1d" /><rect x="304.1" y="701.1" width="1.3" height="0.5" fill="#5a5c61" /><rect x="306.1" y="701.2" width="4.3" height="1.6" fill="#1d1d1d" /><rect x="311.2" y="701.1" width="1.3" height="0.5" fill="#5a5c61" /><rect x="313.2" y="701.2" width="4.3" height="1.6" fill="#1d1d1d" /><rect x="318.3" y="701.1" width="1.3" height="0.5" fill="#5a5c61" /><rect x="320.3" y="701.2" width="4.3" height="1.6" fill="#1d1d1d" /><rect x="325.4" y="701.1" width="1.3" height="0.5" fill="#5a5c61" /><rect x="327.4" y="701.2" width="4.3" height="1.6" fill="#1d1d1d" /><rect x="332.5" y="701.1" width="1.3" height="0.5" fill="#5a5c61" /><rect x="334.5" y="701.2" width="4.3" height="1.6" fill="#1d1d1d" /><rect x="339.6" y="701.1" width="1.3" height="0.5" fill="#5a5c61" /><rect x="341.6" y="701.2" width="4.3" height="1.6" fill="#1d1d1d" /><rect x="346.7" y="701.1" width="1.3" height="0.5" fill="#5a5c61" /><rect x="348.7" y="701.2" width="4.3" height="1.6" fill="#1d1d1d" /><rect x="353.8" y="701.1" width="1.3" height="0.5" fill="#5a5c61" /><rect x="355.8" y="701.2" width="4.3" height="1.6" fill="#1d1d1d" /><rect x="360.9" y="701.1" width="1.3" height="0.5" fill="#5a5c61" /><rect x="362.9" y="701.2" width="4.3" height="1.6" fill="#1d1d1d" /><rect x="368.0" y="701.1" width="1.3" height="0.5" fill="#5a5c61" /><rect x="370.0" y="701.2" width="4.3" height="1.6" fill="#1d1d1d" /><rect x="375.1" y="701.1" width="1.3" height="0.5" fill="#5a5c61" /><rect x="377.1" y="701.2" width="4.3" height="1.6" fill="#1d1d1d" /><rect x="382.2" y="701.1" width="1.3" height="0.5" fill="#5a5c61" /><rect x="384.2" y="701.2" width="4.3" height="1.6" fill="#1d1d1d" /><rect x="389.3" y="701.1" width="1.3" height="0.5" fill="#5a5c61" /><rect x="391.3" y="701.2" width="4.3" height="1.6" fill="#1d1d1d" /><rect x="396.4" y="701.1" width="1.3" height="0.5" fill="#5a5c61" /><rect x="398.4" y="701.2" width="4.3" height="1.6" fill="#1d1d1d" /><rect x="403.5" y="701.1" width="1.3" height="0.5" fill="#5a5c61" /><rect x="405.5" y="701.2" width="4.3" height="1.6" fill="#1d1d1d" /><rect x="410.6" y="701.1" width="1.3" height="0.5" fill="#5a5c61" /><rect x="412.6" y="701.2" width="4.3" height="1.6" fill="#1d1d1d" /><rect x="417.7" y="701.1" width="1.3" height="0.5" fill="#5a5c61" /><rect x="419.7" y="701.2" width="4.3" height="1.6" fill="#1d1d1d" /><rect x="424.8" y="701.1" width="1.3" height="0.5" fill="#5a5c61" /><rect x="426.8" y="701.2" width="4.3" height="1.6" fill="#1d1d1d" /><rect x="431.9" y="701.1" width="1.3" height="0.5" fill="#5a5c61" /><rect x="433.9" y="701.2" width="4.3" height="1.6" fill="#1d1d1d" /><rect x="439.0" y="701.1" width="1.3" height="0.5" fill="#5a5c61" /><rect x="441.0" y="701.2" width="4.3" height="1.6" fill="#1d1d1d" /><rect x="446.1" y="701.1" width="1.3" height="0.5" fill="#5a5c61" /><rect x="295.5" y="680.0" width="139.2" height="10.0" fill="#79839a" /><rect x="295.5" y="680.0" width="139.2" height="1.3" fill="#97a0b5" /><rect x="296.8" y="664.4" width="2.0" height="21.6" fill="#7f89a2" /><rect x="301.6" y="665.5" width="2.0" height="20.5" fill="#7f89a2" /><rect x="315.4" y="664.4" width="2.0" height="21.6" fill="#7f89a2" /><rect x="334.9" y="664.4" width="2.0" height="21.6" fill="#7f89a2" /><rect x="354.2" y="664.4" width="2.0" height="21.6" fill="#7f89a2" /><rect x="373.8" y="664.4" width="2.0" height="21.6" fill="#7f89a2" /><rect x="393.1" y="664.4" width="2.0" height="21.6" fill="#7f89a2" /><rect x="412.8" y="664.4" width="2.0" height="21.6" fill="#7f89a2" /><rect x="426.8" y="665.5" width="2.0" height="20.5" fill="#7f89a2" /><rect x="432.0" y="664.4" width="2.0" height="21.6" fill="#7f89a2" /><rect x="300.0" y="682.0" width="0.6" height="4.0" fill="#5f687d" /><rect x="310.0" y="682.0" width="0.6" height="4.0" fill="#5f687d" /><rect x="320.0" y="682.0" width="0.6" height="4.0" fill="#5f687d" /><rect x="330.0" y="682.0" width="0.6" height="4.0" fill="#5f687d" /><rect x="340.0" y="682.0" width="0.6" height="4.0" fill="#5f687d" /><rect x="350.0" y="682.0" width="0.6" height="4.0" fill="#5f687d" /><rect x="360.0" y="682.0" width="0.6" height="4.0" fill="#5f687d" /><rect x="370.0" y="682.0" width="0.6" height="4.0" fill="#5f687d" /><rect x="380.0" y="682.0" width="0.6" height="4.0" fill="#5f687d" /><rect x="390.0" y="682.0" width="0.6" height="4.0" fill="#5f687d" /><rect x="400.0" y="682.0" width="0.6" height="4.0" fill="#5f687d" /><rect x="410.0" y="682.0" width="0.6" height="4.0" fill="#5f687d" /><rect x="420.0" y="682.0" width="0.6" height="4.0" fill="#5f687d" /><rect x="322.0" y="685.5" width="8.0" height="3.0" fill="#2a2c33" /><rect x="345.0" y="685.5" width="7.0" height="3.0" fill="#2a2c33" /><rect x="366.0" y="685.5" width="6.0" height="3.0" fill="#2a2c33" /><rect x="377.0" y="685.5" width="4.0" height="3.0" fill="#2a2c33" /><rect x="386.0" y="685.5" width="6.0" height="3.0" fill="#2a2c33" /><rect x="397.0" y="685.5" width="9.0" height="3.0" fill="#2a2c33" /><rect x="415.0" y="685.5" width="5.0" height="3.0" fill="#2a2c33" /><rect x="300.0" y="689.5" width="130.0" height="2.0" fill="#4a4f5c" /><path d="M310 690.500 H334 L329 697.500 H315Z" fill="#1a1a1c" /><path d="M396.500 690.500 H420.500 L415.500 697.500 H401.500Z" fill="#1a1a1c" /><circle cx="321.9" cy="694.8" r="5.2" fill="#161616" /><circle cx="321.9" cy="694.8" r="2.3400000000000003" fill="#3a3a3a" /><circle cx="408.5" cy="694.8" r="5.2" fill="#161616" /><circle cx="408.5" cy="694.8" r="2.3400000000000003" fill="#3a3a3a" /><circle cx="321.9" cy="698.3" r="1.5" fill="#c9a227" /><circle cx="408.5" cy="698.3" r="1.5" fill="#c9a227" /><rect x="291.0" y="685.0" width="5.0" height="3.5" fill="#1c1c1e" /><rect x="287.5" y="690.0" width="16.5" height="2.5" fill="#1c1c1e" /><rect x="293.0" y="692.5" width="4.0" height="3.5" fill="#2a2a2c" /><rect x="434.5" y="685.0" width="5.0" height="3.5" fill="#1c1c1e" /><rect x="427.0" y="690.0" width="16.6" height="2.5" fill="#1c1c1e" /><rect x="434.0" y="692.5" width="4.0" height="3.5" fill="#2a2a2c" /><rect x="275.0" y="760.0" width="181.0" height="4.0" fill="#9a9a98" /><rect x="275.0" y="760.0" width="181.0" height="1.1" fill="#858380" /><rect x="275.0" y="761.9" width="181.0" height="0.4" fill="#b2b2b0" /><rect x="275.8" y="762.2" width="4.3" height="1.6" fill="#1d1d1d" /><rect x="280.9" y="762.1" width="1.3" height="0.5" fill="#5a5c61" /><rect x="282.9" y="762.2" width="4.3" height="1.6" fill="#1d1d1d" /><rect x="288.0" y="762.1" width="1.3" height="0.5" fill="#5a5c61" /><rect x="290.0" y="762.2" width="4.3" height="1.6" fill="#1d1d1d" /><rect x="295.1" y="762.1" width="1.3" height="0.5" fill="#5a5c61" /><rect x="297.1" y="762.2" width="4.3" height="1.6" fill="#1d1d1d" /><rect x="302.2" y="762.1" width="1.3" height="0.5" fill="#5a5c61" /><rect x="304.2" y="762.2" width="4.3" height="1.6" fill="#1d1d1d" /><rect x="309.3" y="762.1" width="1.3" height="0.5" fill="#5a5c61" /><rect x="311.3" y="762.2" width="4.3" height="1.6" fill="#1d1d1d" /><rect x="316.4" y="762.1" width="1.3" height="0.5" fill="#5a5c61" /><rect x="318.4" y="762.2" width="4.3" height="1.6" fill="#1d1d1d" /><rect x="323.5" y="762.1" width="1.3" height="0.5" fill="#5a5c61" /><rect x="325.5" y="762.2" width="4.3" height="1.6" fill="#1d1d1d" /><rect x="330.6" y="762.1" width="1.3" height="0.5" fill="#5a5c61" /><rect x="332.6" y="762.2" width="4.3" height="1.6" fill="#1d1d1d" /><rect x="337.7" y="762.1" width="1.3" height="0.5" fill="#5a5c61" /><rect x="339.7" y="762.2" width="4.3" height="1.6" fill="#1d1d1d" /><rect x="344.8" y="762.1" width="1.3" height="0.5" fill="#5a5c61" /><rect x="346.8" y="762.2" width="4.3" height="1.6" fill="#1d1d1d" /><rect x="351.9" y="762.1" width="1.3" height="0.5" fill="#5a5c61" /><rect x="353.9" y="762.2" width="4.3" height="1.6" fill="#1d1d1d" /><rect x="359.0" y="762.1" width="1.3" height="0.5" fill="#5a5c61" /><rect x="361.0" y="762.2" width="4.3" height="1.6" fill="#1d1d1d" /><rect x="366.1" y="762.1" width="1.3" height="0.5" fill="#5a5c61" /><rect x="368.1" y="762.2" width="4.3" height="1.6" fill="#1d1d1d" /><rect x="373.2" y="762.1" width="1.3" height="0.5" fill="#5a5c61" /><rect x="375.2" y="762.2" width="4.3" height="1.6" fill="#1d1d1d" /><rect x="380.3" y="762.1" width="1.3" height="0.5" fill="#5a5c61" /><rect x="382.3" y="762.2" width="4.3" height="1.6" fill="#1d1d1d" /><rect x="387.4" y="762.1" width="1.3" height="0.5" fill="#5a5c61" /><rect x="389.4" y="762.2" width="4.3" height="1.6" fill="#1d1d1d" /><rect x="394.5" y="762.1" width="1.3" height="0.5" fill="#5a5c61" /><rect x="396.5" y="762.2" width="4.3" height="1.6" fill="#1d1d1d" /><rect x="401.6" y="762.1" width="1.3" height="0.5" fill="#5a5c61" /><rect x="403.6" y="762.2" width="4.3" height="1.6" fill="#1d1d1d" /><rect x="408.7" y="762.1" width="1.3" height="0.5" fill="#5a5c61" /><rect x="410.7" y="762.2" width="4.3" height="1.6" fill="#1d1d1d" /><rect x="415.8" y="762.1" width="1.3" height="0.5" fill="#5a5c61" /><rect x="417.8" y="762.2" width="4.3" height="1.6" fill="#1d1d1d" /><rect x="422.9" y="762.1" width="1.3" height="0.5" fill="#5a5c61" /><rect x="424.9" y="762.2" width="4.3" height="1.6" fill="#1d1d1d" /><rect x="430.0" y="762.1" width="1.3" height="0.5" fill="#5a5c61" /><rect x="432.0" y="762.2" width="4.3" height="1.6" fill="#1d1d1d" /><rect x="437.1" y="762.1" width="1.3" height="0.5" fill="#5a5c61" /><rect x="439.1" y="762.2" width="4.3" height="1.6" fill="#1d1d1d" /><rect x="444.2" y="762.1" width="1.3" height="0.5" fill="#5a5c61" /><rect x="446.2" y="762.2" width="4.3" height="1.6" fill="#1d1d1d" /><rect x="451.3" y="762.1" width="1.3" height="0.5" fill="#5a5c61" /><rect x="345.3" y="711.0" width="27.7" height="2.8" fill="#17181c" /><rect x="343.0" y="712.5" width="3.0" height="2.5" fill="#222" /><rect x="363.0" y="712.0" width="5.0" height="2.0" fill="#333" /><rect x="291.400" y="714" width="148.100" height="31.800" rx="8" ry="13" fill="url(#blu)"/><rect x="307.0" y="715.0" width="0.7" height="30.0" fill="#0a2270" opacity=".55"/><rect x="337.0" y="715.0" width="0.7" height="30.0" fill="#0a2270" opacity=".55"/><rect x="366.5" y="715.0" width="0.7" height="30.0" fill="#0a2270" opacity=".55"/><rect x="393.5" y="715.0" width="0.7" height="30.0" fill="#0a2270" opacity=".55"/><rect x="423.0" y="715.0" width="0.7" height="30.0" fill="#0a2270" opacity=".55"/><path d="M346.800 711.500 V750 M351.300 711.500 V750 M346.800 715 H351.300 M346.800 719 H351.300 M346.800 723 H351.300 M346.800 727 H351.300 M346.800 731 H351.300 M346.800 735 H351.300 M346.800 739 H351.300 M346.800 743 H351.300 M346.800 747 H351.300" fill="none" stroke="#101114" stroke-width="0.900"/><rect x="297.8" y="736.0" width="21.2" height="9.0" fill="#0d0f14" /><rect x="299.0" y="737.0" width="19.0" height="1.0" fill="#aeb4c2" /><rect x="299.0" y="739.5" width="10.0" height="0.8" fill="#8d94a5" /><rect x="305.0" y="741.0" width="3.0" height="3.0" fill="#9aa1b0" /><rect x="311.0" y="741.0" width="7.0" height="1.0" fill="#8d94a5" /><path d="M285.500 732 V746" fill="none" stroke="#222" stroke-width="0.900"/><rect x="280.6" y="745.6" width="169.9" height="3.2" fill="#121316" /><rect x="329.0" y="748.8" width="16.0" height="3.7" fill="#1a1b1f" /><rect x="345.0" y="750.0" width="50.0" height="1.0" fill="#333" /><rect x="367.0" y="751.0" width="25.0" height="1.2" fill="#2a2a2a" /><path d="M289.6 749 H326 L324 755 H291.6Z" fill="#18191d" /><rect x="295.6" y="751.0" width="24.4" height="2.0" fill="#3a3c42" /><path d="M404.4 749 H441.5 L439.5 755 H406.4Z" fill="#18191d" /><rect x="410.4" y="751.0" width="25.1" height="2.0" fill="#3a3c42" /><circle cx="296.5" cy="755.5" r="4" fill="#17181b" /><circle cx="296.5" cy="755.5" r="1.7" fill="#4c4e55" /><circle cx="319.0" cy="755.5" r="4" fill="#17181b" /><circle cx="319.0" cy="755.5" r="1.7" fill="#4c4e55" /><circle cx="411.5" cy="755.5" r="4" fill="#17181b" /><circle cx="411.5" cy="755.5" r="1.7" fill="#4c4e55" /><circle cx="434.5" cy="755.5" r="4" fill="#17181b" /><circle cx="434.5" cy="755.5" r="1.7" fill="#4c4e55" /><rect x="281.0" y="749.5" width="9.0" height="2.5" fill="#1a1a1c" /><rect x="277.0" y="753.0" width="10.0" height="2.0" fill="#1a1a1c" /><rect x="441.0" y="749.5" width="9.0" height="2.5" fill="#1a1a1c" /><rect x="444.0" y="753.0" width="10.0" height="2.0" fill="#1a1a1c" /><rect x="304.0" y="820.7" width="122.0" height="4.3" fill="#9a9a98" /><rect x="304.0" y="820.7" width="122.0" height="1.1" fill="#858380" /><rect x="304.0" y="822.6" width="122.0" height="0.7" fill="#b2b2b0" /><rect x="304.8" y="823.2" width="4.3" height="1.6" fill="#1d1d1d" /><rect x="309.9" y="822.8" width="1.3" height="0.8" fill="#5a5c61" /><rect x="311.9" y="823.2" width="4.3" height="1.6" fill="#1d1d1d" /><rect x="317.0" y="822.8" width="1.3" height="0.8" fill="#5a5c61" /><rect x="319.0" y="823.2" width="4.3" height="1.6" fill="#1d1d1d" /><rect x="324.1" y="822.8" width="1.3" height="0.8" fill="#5a5c61" /><rect x="326.1" y="823.2" width="4.3" height="1.6" fill="#1d1d1d" /><rect x="331.2" y="822.8" width="1.3" height="0.8" fill="#5a5c61" /><rect x="333.2" y="823.2" width="4.3" height="1.6" fill="#1d1d1d" /><rect x="338.3" y="822.8" width="1.3" height="0.8" fill="#5a5c61" /><rect x="340.3" y="823.2" width="4.3" height="1.6" fill="#1d1d1d" /><rect x="345.4" y="822.8" width="1.3" height="0.8" fill="#5a5c61" /><rect x="347.4" y="823.2" width="4.3" height="1.6" fill="#1d1d1d" /><rect x="352.5" y="822.8" width="1.3" height="0.8" fill="#5a5c61" /><rect x="354.5" y="823.2" width="4.3" height="1.6" fill="#1d1d1d" /><rect x="359.6" y="822.8" width="1.3" height="0.8" fill="#5a5c61" /><rect x="361.6" y="823.2" width="4.3" height="1.6" fill="#1d1d1d" /><rect x="366.7" y="822.8" width="1.3" height="0.8" fill="#5a5c61" /><rect x="368.7" y="823.2" width="4.3" height="1.6" fill="#1d1d1d" /><rect x="373.8" y="822.8" width="1.3" height="0.8" fill="#5a5c61" /><rect x="375.8" y="823.2" width="4.3" height="1.6" fill="#1d1d1d" /><rect x="380.9" y="822.8" width="1.3" height="0.8" fill="#5a5c61" /><rect x="382.9" y="823.2" width="4.3" height="1.6" fill="#1d1d1d" /><rect x="388.0" y="822.8" width="1.3" height="0.8" fill="#5a5c61" /><rect x="390.0" y="823.2" width="4.3" height="1.6" fill="#1d1d1d" /><rect x="395.1" y="822.8" width="1.3" height="0.8" fill="#5a5c61" /><rect x="397.1" y="823.2" width="4.3" height="1.6" fill="#1d1d1d" /><rect x="402.2" y="822.8" width="1.3" height="0.8" fill="#5a5c61" /><rect x="404.2" y="823.2" width="4.3" height="1.6" fill="#1d1d1d" /><rect x="409.3" y="822.8" width="1.3" height="0.8" fill="#5a5c61" /><rect x="411.3" y="823.2" width="4.3" height="1.6" fill="#1d1d1d" /><rect x="416.4" y="822.8" width="1.3" height="0.8" fill="#5a5c61" /><rect x="418.4" y="823.2" width="4.3" height="1.6" fill="#1d1d1d" /><rect x="423.5" y="822.8" width="1.3" height="0.8" fill="#5a5c61" /><path d="M317.500 776 H412 V781.200 L399 797 H331.500 L317.500 781.200Z" fill="url(#hop)" /><rect x="317.5" y="776.0" width="94.5" height="1.2" fill="#9ba3b6" /><path d="M318 782 L318 800 Q318 804 320.500 806" fill="none" stroke="#4a4d57" stroke-width="0.700"/><path d="M411.500 782 V806" fill="none" stroke="#4a4d57" stroke-width="0.700"/><path d="M322 798 L328 791 H331.500 L333 797 H400 L402.500 793 V809.500 H320.500Z" fill="#a9afbe" /><rect x="329.5" y="797.5" width="3.0" height="5.0" fill="#f1f2f5" /><rect x="395.0" y="798.0" width="3.5" height="5.0" fill="#e9ebef" /><rect x="343.9" y="799.0" width="10.3" height="7.0" fill="#17181c" /><rect x="375.5" y="799.0" width="10.3" height="7.0" fill="#17181c" /><rect x="358.5" y="799.0" width="12.5" height="3.0" fill="#2c2e35" /><rect x="323.0" y="807.0" width="78.0" height="3.0" fill="#9298a8" /><rect x="344.0" y="810.0" width="11.0" height="7.0" fill="#a4abbb" /><rect x="375.0" y="810.0" width="11.0" height="7.0" fill="#a4abbb" /><rect x="346.0" y="812.0" width="7.0" height="1.5" fill="#858c9d" /><rect x="377.0" y="812.0" width="7.0" height="1.5" fill="#858c9d" /><rect x="363.8" y="810.0" width="2.0" height="7.5" fill="#18191c" /><rect x="326.0" y="809.5" width="17.0" height="2.5" fill="#1b1c20" /><rect x="387.0" y="809.5" width="17.0" height="2.5" fill="#1b1c20" /><circle cx="334.3" cy="815.2" r="5.3" fill="#161616" /><circle cx="334.3" cy="815.2" r="2.385" fill="#3a3a3a" /><circle cx="395.5" cy="815.2" r="5.3" fill="#161616" /><circle cx="395.5" cy="815.2" r="2.385" fill="#3a3a3a" /><rect x="403.0" y="807.0" width="6.0" height="9.0" fill="#aab1c1" opacity=".9"/><rect x="404.5" y="809.0" width="3.0" height="1.0" fill="#6f7686" /><rect x="404.5" y="812.0" width="3.0" height="1.0" fill="#6f7686" /><rect x="311.5" y="806.5" width="6.5" height="3.5" fill="#1b1b1d" /><rect x="306.8" y="812.5" width="14.2" height="2.5" fill="#1b1b1d" /><rect x="312.0" y="815.0" width="4.0" height="3.5" fill="#2b2b2d" /><rect x="409.0" y="806.5" width="9.0" height="3.5" fill="#1b1b1d" /><rect x="407.0" y="812.5" width="15.3" height="2.5" fill="#1b1b1d" /><rect x="413.0" y="815.0" width="4.0" height="3.5" fill="#2b2b2d" /><rect x="255.0" y="883.0" width="222.0" height="1.0" fill="#8d8d8d" /><path d="M294 836.500 H437 L456 853 H276.500Z" fill="#3a3d43" /><rect x="296.0" y="836.2" width="139.0" height="2.0" fill="#5a5e66" /><rect x="302.0" y="837.0" width="10.0" height="2.0" fill="#8a8d92" /><rect x="420.0" y="837.0" width="10.0" height="2.0" fill="#8a8d92" /><rect x="310.0" y="839.5" width="0.6" height="5.0" fill="#2a2c31" /><rect x="324.0" y="839.5" width="0.6" height="5.0" fill="#2a2c31" /><rect x="338.0" y="839.5" width="0.6" height="5.0" fill="#2a2c31" /><rect x="352.0" y="839.5" width="0.6" height="5.0" fill="#2a2c31" /><rect x="366.0" y="839.5" width="0.6" height="5.0" fill="#2a2c31" /><rect x="380.0" y="839.5" width="0.6" height="5.0" fill="#2a2c31" /><rect x="394.0" y="839.5" width="0.6" height="5.0" fill="#2a2c31" /><rect x="408.0" y="839.5" width="0.6" height="5.0" fill="#2a2c31" /><rect x="422.0" y="839.5" width="0.6" height="5.0" fill="#2a2c31" /><path d="M276.500 853 L282 847.500 Q284 845 290 845 H441 Q447 845 449 847.500 L455.500 853 Q461 861 460.200 869.500 H271.200 Q270.300 861 276.500 853Z" fill="#e7271b" /><path d="M275.500 854.500 L281.500 847.800 H295.500 V855.500Z" fill="#23262b" /><path d="M456 854.500 L450 847.800 H435.500 V855.500Z" fill="#23262b" /><rect x="282.5" y="848.5" width="4.0" height="5.5" fill="#d9d4c4" /><rect x="443.5" y="848.5" width="4.0" height="5.5" fill="#d9d4c4" /><path d="M286 856 V866 M293 856 V866 M437.500 856 V866 M444.500 856 V866" fill="none" stroke="#f0b2a8" stroke-width="0.800"/><path d="M384 858 L394 849 H408 L417.600 858 L408 867 H394Z" fill="#f7d9d4" /><rect x="384.0" y="851.5" width="34.0" height="1.5" fill="#e7271b" /><rect x="384.0" y="855.0" width="34.0" height="1.5" fill="#e7271b" /><rect x="384.0" y="861.0" width="34.0" height="1.5" fill="#e7271b" /><rect x="384.0" y="864.5" width="34.0" height="1.5" fill="#e7271b" /><rect x="384.5" y="857.0" width="33.0" height="2.0" fill="#fff" /><rect x="399.5" y="849.5" width="3.0" height="17.0" fill="#fff" /><text x="310.500" y="867" font-size="5.800" font-weight="bold" fill="#fff" textLength="28.500" lengthAdjust="spacingAndGlyphs">SBB CFF FFS</text><rect x="273.6" y="869.4" width="185.8" height="5.8" fill="#4b4e54" /><rect x="272.0" y="869.4" width="189.0" height="1.0" fill="#6d7077" /><rect x="310.0" y="872.5" width="8.0" height="0.8" fill="#c9c9c9" /><rect x="320.0" y="872.5" width="25.0" height="0.6" fill="#9a9a9a" /><rect x="410.0" y="871.5" width="8.0" height="1.5" fill="#d5d5d5" /><rect x="280.0" y="875.2" width="172.0" height="3.3" fill="#1c1d20" /><rect x="283.0" y="876.0" width="44.0" height="6.5" fill="#18191c" /><rect x="403.0" y="876.0" width="44.0" height="6.5" fill="#18191c" /><circle cx="292.0" cy="880.0" r="3.2" fill="#3a3c42" /><circle cx="318.5" cy="880.0" r="3.2" fill="#3a3c42" /><circle cx="411.5" cy="880.0" r="3.2" fill="#3a3c42" /><circle cx="438.0" cy="880.0" r="3.2" fill="#3a3c42" /><rect x="264.0" y="869.0" width="10.0" height="3.5" fill="#2a2a2c" /><rect x="260.5" y="873.5" width="15.5" height="2.5" fill="#2a2a2c" /><rect x="459.0" y="869.0" width="8.0" height="3.5" fill="#2a2a2c" /><rect x="457.0" y="873.5" width="12.2" height="2.5" fill="#2a2a2c" /></svg>
<span class="t" style="left:29.2px;top:10px;font-size:11.66px;letter-spacing:-0.090px;">Fahrzeuge - MVS</span>
<span class="t" style="left:73.0px;top:64px;font-size:11.66px;letter-spacing:0.207px;">Start</span>
<span class="t" style="left:125.6px;top:64px;font-size:11.66px;letter-spacing:0.294px;">Ansicht</span>
<span class="t" style="left:192.2px;top:64px;font-size:11.66px;letter-spacing:0.119px;">Fahrzeug</span>
<span class="t" style="left:269.2px;top:64px;font-size:11.66px;letter-spacing:0.377px;">Hilfe</span>
<span class="t" style="left:1174.3px;top:60px;font-size:11.66px;letter-spacing:0.311px;color:#e0202a;">Muster Hans</span>
<span class="t" style="left:1247.4px;top:60px;font-size:11.66px;letter-spacing:-0.032px;">verbunden mit LGFAPPSRV / LGFDBSRV - Mvs</span>
<span class="t" style="left:20.6px;top:124px;font-size:11.66px;letter-spacing:0.475px;">Neu</span>
<span class="t" style="left:57.6px;top:124px;font-size:11.66px;letter-spacing:0.168px;color:#a3a3a3;">Speichern</span>
<span class="t" style="left:135.0px;top:89px;font-size:11.66px;letter-spacing:0.486px;color:#a3a3a3;">Öffnen</span>
<span class="t" style="left:135.0px;top:112px;font-size:11.66px;letter-spacing:0.085px;color:#a3a3a3;">Löschen</span>
<span class="t" style="left:83.3px;top:156px;font-size:11.66px;letter-spacing:0.304px;color:#979797;">Datei</span>
<span class="t" style="left:221.6px;top:89px;font-size:11.66px;letter-spacing:0.206px;color:#a3a3a3;">Ausschneiden</span>
<span class="t" style="left:221.0px;top:112px;font-size:11.66px;letter-spacing:0.308px;color:#a3a3a3;">Kopieren</span>
<span class="t" style="left:221.0px;top:134px;font-size:11.66px;letter-spacing:0.256px;color:#a3a3a3;">Einfügen</span>
<span class="t" style="left:207.4px;top:156px;font-size:11.66px;letter-spacing:0.223px;color:#979797;">Zwischenablage</span>
<span class="t" style="left:319.6px;top:124px;font-size:11.66px;letter-spacing:0.253px;">Datenvorschau</span>
<span class="t" style="left:406.5px;top:124px;font-size:11.66px;letter-spacing:0.374px;">Daten in Tab</span>
<span class="t" style="left:410.6px;top:137px;font-size:11.66px;letter-spacing:0.340px;">Darstellung</span>
<span class="t" style="left:488.3px;top:124px;font-size:11.66px;letter-spacing:0.636px;">Zoom</span>
<span class="t" style="left:402.0px;top:156px;font-size:11.66px;letter-spacing:0.294px;color:#979797;">Ansicht</span>
<span class="t" style="left:544.3px;top:124px;font-size:11.66px;letter-spacing:0.062px;">PDF Report</span>
<span class="t" style="left:553.0px;top:137px;font-size:11.66px;letter-spacing:0.252px;">erstellen</span>
<span class="t" style="left:615.8px;top:124px;font-size:11.66px;letter-spacing:0.044px;color:#a3a3a3;">SQL Script</span>
<span class="t" style="left:621.3px;top:137px;font-size:11.66px;letter-spacing:0.252px;color:#a3a3a3;">erstellen</span>
<span class="t" style="left:683.2px;top:124px;font-size:11.66px;letter-spacing:0.285px;color:#a3a3a3;">E-Mail</span>
<span class="t" style="left:681.3px;top:137px;font-size:11.66px;letter-spacing:0.230px;color:#a3a3a3;">senden</span>
<span class="t" style="left:728.6px;top:124px;font-size:11.66px;letter-spacing:0.359px;">Vorschaubilder</span>
<span class="t" style="left:735.8px;top:137px;font-size:11.66px;letter-spacing:0.248px;">aktualisieren</span>
<span class="t" style="left:662.9px;top:156px;font-size:11.66px;letter-spacing:-0.157px;color:#979797;">Extras</span>
<span class="t" style="left:13.4px;top:188px;font-size:12.32px;letter-spacing:0.672px;color:#444;">Menü</span>
<span class="t" style="left:13.4px;top:214px;font-size:16.2px;letter-spacing:-0.109px;color:#3838ff;">Sammlung</span>
<span class="t" style="left:32.5px;top:245px;font-size:16.04px;letter-spacing:0.126px;">1 Sammlung1</span>
<span class="t" style="left:35.8px;top:278px;font-size:12.32px;letter-spacing:0.141px;">(Alle Spurweiten)</span>
<span class="t" style="left:35.8px;top:308px;font-size:12.32px;letter-spacing:0.154px;">(Alle Kategorien)</span>
<span class="t" style="left:35.8px;top:338px;font-size:12.32px;letter-spacing:0.117px;">(Alle Hersteller)</span>
<span class="t" style="left:30.6px;top:365px;font-size:12.32px;letter-spacing:-0.019px;">Fahrzeuge</span>
<span class="t" style="left:30.6px;top:391px;font-size:12.32px;letter-spacing:0.120px;">Meine Fahrzeuge</span>
<span class="t" style="left:30.6px;top:416px;font-size:12.32px;letter-spacing:0.082px;">Inexistente Fahrzeuge</span>
<span class="t" style="left:30.6px;top:441px;font-size:12.32px;letter-spacing:0.012px;">Fahrzeuge suchen</span>
<span class="t" style="left:30.6px;top:466px;font-size:12.32px;letter-spacing:0.208px;">Züge</span>
<span class="t" style="left:30.6px;top:492px;font-size:12.32px;letter-spacing:0.346px;">Offene Arbeiten</span>
<span class="t" style="left:31.2px;top:517px;font-size:12.32px;letter-spacing:0.320px;">Alle Arbeiten</span>
<span class="t" style="left:13.4px;top:544px;font-size:16.2px;letter-spacing:-0.081px;color:#3838ff;width:170.5px;overflow:hidden;padding-bottom:5px;">Modelle (Produktkatalog)</span>
<span class="t" style="left:35.8px;top:578px;font-size:12.32px;letter-spacing:0.141px;">(Alle Spurweiten)</span>
<span class="t" style="left:35.8px;top:608px;font-size:12.32px;letter-spacing:0.154px;">(Alle Kategorien)</span>
<span class="t" style="left:35.8px;top:637px;font-size:12.32px;letter-spacing:0.117px;">(Alle Hersteller)</span>
<span class="t" style="left:31.2px;top:665px;font-size:12.32px;letter-spacing:0.335px;">Alle Modelle</span>
<span class="t" style="left:30.6px;top:690px;font-size:12.32px;letter-spacing:0.326px;">Hersteller-Modelle</span>
<span class="t" style="left:30.6px;top:716px;font-size:12.32px;letter-spacing:0.207px;">Eigene Modelle</span>
<span class="t" style="left:30.6px;top:741px;font-size:12.32px;letter-spacing:0.255px;">Modelle suchen</span>
<span class="t" style="left:30.6px;top:767px;font-size:12.32px;letter-spacing:0.153px;">Sets und mehrteilige Fahr.</span>
<span class="t" style="left:14.0px;top:794px;font-size:16.2px;letter-spacing:-0.046px;color:#3838ff;">Vorbild-Fahrzeuge</span>
<span class="t" style="left:30.9px;top:826px;font-size:12.32px;letter-spacing:0.269px;">Vorbild-Fahrzeuge</span>
<span class="t" style="left:13.4px;top:853px;font-size:16.2px;letter-spacing:0.045px;color:#3838ff;">Decoder</span>
<span class="t" style="left:30.3px;top:883px;font-size:12.32px;letter-spacing:0.207px;">Decoder</span>
<span class="t" style="left:220.2px;top:186px;font-size:12.32px;letter-spacing:-0.019px;color:#fff;">Fahrzeuge</span>
<span class="t" style="left:225.5px;top:223px;font-size:16.2px;letter-spacing:-0.266px;color:#3838ff;">Fahrzeuge</span>
<span class="t" style="left:1203.2px;top:227px;font-size:12.32px;letter-spacing:0.007px;">Anzahl:</span>
<span class="t" style="left:1253.4px;top:227px;font-size:12.32px;letter-spacing:0.083px;">546</span>
<span class="t" style="left:1285.8px;top:227px;font-size:12.32px;letter-spacing:0.010px;">Filter:</span>
<span class="t" style="left:233.8px;top:261px;font-size:12.32px;letter-spacing:0.159px;">Bild</span>
<span class="t" style="left:508.0px;top:261px;font-size:12.32px;letter-spacing:0.285px;">InventarNr</span>
<span class="t" style="left:578.8px;top:261px;font-size:12.32px;letter-spacing:0.161px;">Hersteller</span>
<span class="t" style="left:643.4px;top:261px;font-size:12.32px;letter-spacing:0.374px;">ArtikelNr</span>
<span class="t" style="left:708.7px;top:261px;font-size:12.32px;letter-spacing:0.108px;">Bezeichnung</span>
<span class="t" style="left:881.9px;top:261px;font-size:12.32px;letter-spacing:0.062px;">Bahngesellschaft</span>
<span class="t" style="left:986.5px;top:261px;font-size:12.32px;letter-spacing:0.346px;">Gattung</span>
<span class="t" style="left:1128.2px;top:261px;font-size:12.32px;letter-spacing:0.027px;">Baureihe</span>
<span class="t" style="left:1197.0px;top:261px;font-size:12.32px;letter-spacing:0.170px;">BetriebsNr</span>
<span class="t" style="left:1312.4px;top:261px;font-size:12.32px;letter-spacing:0.436px;">Modellursprung</span>
<span class="t" style="left:508.6px;top:304px;font-size:12.32px;letter-spacing:0.117px;">INV0001</span>
<span class="t" style="left:578.8px;top:304px;font-size:12.32px;letter-spacing:0.397px;">Märklin</span>
<span class="t" style="left:642.8px;top:304px;font-size:12.32px;letter-spacing:0.166px;">29530-a</span>
<span class="t" style="left:708.7px;top:304px;font-size:12.32px;letter-spacing:-0.158px;">BR 86 132</span>
<span class="t" style="left:881.9px;top:304px;font-size:12.32px;letter-spacing:-0.546px;">DR</span>
<span class="t" style="left:986.5px;top:304px;font-size:12.32px;letter-spacing:0.444px;">Dampflokomotive</span>
<span class="t" style="left:1128.2px;top:304px;font-size:12.32px;letter-spacing:-0.358px;">BR 86</span>
<span class="t" style="left:1197.0px;top:304px;font-size:12.32px;letter-spacing:0.085px;">86 132</span>
<span class="t" style="left:1312.4px;top:304px;font-size:12.32px;letter-spacing:0.277px;">Herstellermodell unverändert</span>
<span class="t" style="left:508.6px;top:364px;font-size:12.32px;letter-spacing:0.117px;">INV0002</span>
<span class="t" style="left:578.8px;top:364px;font-size:12.32px;letter-spacing:0.397px;">Märklin</span>
<span class="t" style="left:642.8px;top:364px;font-size:12.32px;letter-spacing:0.311px;">29530-b</span>
<span class="t" style="left:708.7px;top:364px;font-size:12.32px;letter-spacing:0.075px;">Gedeckter Güterwagen Gs</span>
<span class="t" style="left:881.9px;top:364px;font-size:12.32px;letter-spacing:-0.363px;">DB</span>
<span class="t" style="left:986.5px;top:364px;font-size:12.32px;letter-spacing:0.152px;">Gedeckter Güterwagen</span>
<span class="t" style="left:1128.2px;top:364px;font-size:12.32px;letter-spacing:-0.600px;">Gs</span>
<span class="t" style="left:1197.0px;top:364px;font-size:12.32px;letter-spacing:0.144px;">01 80 120 6 086-1</span>
<span class="t" style="left:1312.4px;top:364px;font-size:12.32px;letter-spacing:0.265px;">Herstellermodell verändert</span>
<span class="t" style="left:508.6px;top:425px;font-size:12.32px;letter-spacing:0.117px;">INV0003</span>
<span class="t" style="left:578.8px;top:425px;font-size:12.32px;letter-spacing:0.397px;">Märklin</span>
<span class="t" style="left:642.8px;top:425px;font-size:12.32px;letter-spacing:0.191px;">29530-e</span>
<span class="t" style="left:708.7px;top:425px;font-size:12.32px;letter-spacing:-0.083px;">Kesselwagen</span>
<span class="t" style="left:881.9px;top:425px;font-size:12.32px;letter-spacing:-0.363px;">DB</span>
<span class="t" style="left:986.5px;top:425px;font-size:12.32px;letter-spacing:-0.083px;">Kesselwagen</span>
<span class="t" style="left:1197.0px;top:425px;font-size:12.32px;letter-spacing:0.085px;">582 258</span>
<span class="t" style="left:1312.4px;top:425px;font-size:12.32px;letter-spacing:0.265px;">Herstellermodell verändert</span>
<span class="t" style="left:508.6px;top:486px;font-size:12.32px;letter-spacing:0.117px;">INV0006</span>
<span class="t" style="left:578.8px;top:486px;font-size:12.32px;letter-spacing:0.397px;">Märklin</span>
<span class="t" style="left:642.8px;top:486px;font-size:12.32px;letter-spacing:0.294px;">29530-f</span>
<span class="t" style="left:708.7px;top:486px;font-size:12.32px;letter-spacing:0.248px;">Güterzug-Begleitwagen</span>
<span class="t" style="left:881.9px;top:486px;font-size:12.32px;letter-spacing:-0.600px;">DRG</span>
<span class="t" style="left:986.5px;top:486px;font-size:12.32px;letter-spacing:0.286px;">Güterzugbegleitwagen</span>
<span class="t" style="left:1128.2px;top:486px;font-size:12.32px;letter-spacing:0.036px;">Pwg</span>
<span class="t" style="left:1197.0px;top:486px;font-size:12.32px;letter-spacing:0.085px;">121 815</span>
<span class="t" style="left:1312.4px;top:486px;font-size:12.32px;letter-spacing:0.265px;">Herstellermodell verändert</span>
<span class="t" style="left:508.6px;top:547px;font-size:12.32px;letter-spacing:0.117px;">INV0007</span>
<span class="t" style="left:578.8px;top:547px;font-size:12.32px;letter-spacing:0.397px;">Märklin</span>
<span class="t" style="left:642.8px;top:547px;font-size:12.32px;letter-spacing:0.166px;">29850-a</span>
<span class="t" style="left:709.3px;top:547px;font-size:12.32px;letter-spacing:0.331px;">Ae 6/6 11453 'Arth-Goldau'</span>
<span class="t" style="left:881.9px;top:547px;font-size:12.32px;letter-spacing:-0.600px;">SBB</span>
<span class="t" style="left:986.5px;top:547px;font-size:12.32px;letter-spacing:0.297px;">Elektro-Lokomotive</span>
<span class="t" style="left:1128.8px;top:547px;font-size:12.32px;letter-spacing:0.300px;">Ae 6/6</span>
<span class="t" style="left:1197.0px;top:547px;font-size:12.32px;letter-spacing:0.266px;">11453</span>
<span class="t" style="left:1312.4px;top:547px;font-size:12.32px;letter-spacing:0.277px;">Herstellermodell unverändert</span>
<span class="t" style="left:508.6px;top:608px;font-size:12.32px;letter-spacing:0.117px;">INV0008</span>
<span class="t" style="left:578.8px;top:608px;font-size:12.32px;letter-spacing:0.397px;">Märklin</span>
<span class="t" style="left:642.8px;top:608px;font-size:12.32px;letter-spacing:0.311px;">29850-b</span>
<span class="t" style="left:708.7px;top:608px;font-size:12.32px;letter-spacing:0.159px;">Hochbordwagen Eaos</span>
<span class="t" style="left:881.9px;top:608px;font-size:12.32px;letter-spacing:-0.600px;">SBB</span>
<span class="t" style="left:986.5px;top:608px;font-size:12.32px;letter-spacing:0.367px;">Hochbordwagen</span>
<span class="t" style="left:1128.2px;top:608px;font-size:12.32px;letter-spacing:-0.509px;">Eaos</span>
<span class="t" style="left:1197.0px;top:608px;font-size:12.32px;letter-spacing:0.198px;">11 85 532 0 659-0</span>
<span class="t" style="left:1312.4px;top:608px;font-size:12.32px;letter-spacing:0.265px;">Herstellermodell verändert</span>
<span class="t" style="left:508.6px;top:669px;font-size:12.32px;letter-spacing:0.117px;">INV0009</span>
<span class="t" style="left:578.8px;top:669px;font-size:12.32px;letter-spacing:0.397px;">Märklin</span>
<span class="t" style="left:642.8px;top:669px;font-size:12.32px;letter-spacing:0.191px;">29850-e</span>
<span class="t" style="left:708.7px;top:669px;font-size:12.32px;letter-spacing:0.235px;">Niederbordwagen Ks</span>
<span class="t" style="left:881.9px;top:669px;font-size:12.32px;letter-spacing:-0.600px;">SBB</span>
<span class="t" style="left:986.5px;top:669px;font-size:12.32px;letter-spacing:0.372px;">Niederbordwagen</span>
<span class="t" style="left:1128.2px;top:669px;font-size:12.32px;letter-spacing:-0.600px;">Ks</span>
<span class="t" style="left:1197.0px;top:669px;font-size:12.32px;letter-spacing:0.144px;">01 85 330 1 376-1</span>
<span class="t" style="left:1312.4px;top:669px;font-size:12.32px;letter-spacing:0.265px;">Herstellermodell verändert</span>
<span class="t" style="left:508.6px;top:730px;font-size:12.32px;letter-spacing:0.117px;">INV0010</span>
<span class="t" style="left:578.8px;top:730px;font-size:12.32px;letter-spacing:0.397px;">Märklin</span>
<span class="t" style="left:642.8px;top:730px;font-size:12.32px;letter-spacing:0.178px;">29850-c</span>
<span class="t" style="left:708.7px;top:730px;font-size:12.32px;letter-spacing:-0.083px;">Kesselwagen</span>
<span class="t" style="left:881.9px;top:730px;font-size:12.32px;letter-spacing:-0.600px;">SBB</span>
<span class="t" style="left:986.5px;top:730px;font-size:12.32px;letter-spacing:-0.083px;">Kesselwagen</span>
<span class="t" style="left:1197.0px;top:730px;font-size:12.32px;letter-spacing:0.144px;">33 85 785 7 147-7</span>
<span class="t" style="left:1312.4px;top:730px;font-size:12.32px;letter-spacing:0.265px;">Herstellermodell verändert</span>
<span class="t" style="left:508.6px;top:791px;font-size:12.32px;letter-spacing:0.246px;">INV0011</span>
<span class="t" style="left:578.8px;top:791px;font-size:12.32px;letter-spacing:0.397px;">Märklin</span>
<span class="t" style="left:642.8px;top:791px;font-size:12.32px;letter-spacing:0.313px;">29850-d</span>
<span class="t" style="left:708.7px;top:791px;font-size:12.32px;letter-spacing:0.311px;">Schüttgutwagen</span>
<span class="t" style="left:881.9px;top:791px;font-size:12.32px;letter-spacing:-0.600px;">SBB</span>
<span class="t" style="left:986.5px;top:791px;font-size:12.32px;letter-spacing:0.159px;">Selbstentladewagen</span>
<span class="t" style="left:1197.0px;top:791px;font-size:12.32px;letter-spacing:0.144px;">21 85 645 0 073-2</span>
<span class="t" style="left:1312.4px;top:791px;font-size:12.32px;letter-spacing:0.277px;">Herstellermodell unverändert</span>
<span class="t" style="left:508.6px;top:851px;font-size:12.32px;letter-spacing:0.117px;">INV0012</span>
<span class="t" style="left:578.8px;top:851px;font-size:12.32px;letter-spacing:0.397px;">Märklin</span>
<span class="t" style="left:642.8px;top:851px;font-size:12.32px;letter-spacing:0.294px;">29850-f</span>
<span class="t" style="left:708.7px;top:851px;font-size:12.32px;letter-spacing:-0.062px;">Re 460 046</span>
<span class="t" style="left:881.9px;top:851px;font-size:12.32px;letter-spacing:-0.600px;">SBB</span>
<span class="t" style="left:986.5px;top:851px;font-size:12.32px;letter-spacing:0.297px;">Elektro-Lokomotive</span>
<span class="t" style="left:1128.2px;top:851px;font-size:12.32px;letter-spacing:-0.161px;">Re 460</span>
<span class="t" style="left:1197.0px;top:851px;font-size:12.32px;letter-spacing:0.191px;">460 046-6</span>
<span class="t" style="left:1312.4px;top:851px;font-size:12.32px;letter-spacing:0.277px;">Herstellermodell unverändert</span>
</body></html>
